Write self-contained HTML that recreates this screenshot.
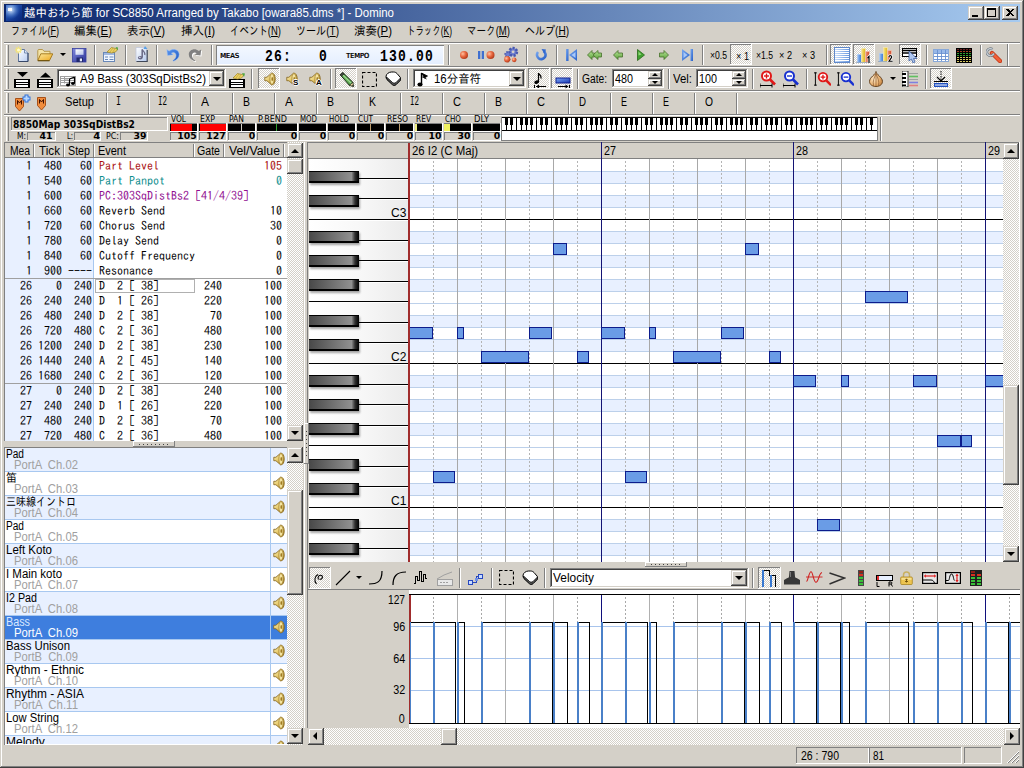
<!DOCTYPE html>
<html lang="ja"><head><meta charset="utf-8"><title>Domino</title>
<style>
html,body{margin:0;padding:0;width:1024px;height:768px;overflow:hidden;background:#d4d0c8}
#w{position:relative;width:1024px;height:768px;overflow:hidden;font-family:"Liberation Sans","IPAGothic",sans-serif;font-size:12px}
#w div,#w span.t,#w svg{position:absolute;box-sizing:border-box}
#w span.t{white-space:pre;display:block}
#w span.m{font-family:"IPAGothic","Liberation Mono",monospace;font-size:12px;line-height:14px}
.dz{background:repeating-conic-gradient(#fff 0% 25%,#d4d0c8 0% 50%) 0 0/2px 2px}
</style></head><body><div id="w">
<div style="left:0px;top:0px;width:1024px;height:768px;background:#d4d0c8"></div>
<div style="left:1px;top:1px;width:1021px;height:1px;background:#ffffff"></div>
<div style="left:1px;top:1px;width:1px;height:765px;background:#ffffff"></div>
<div style="left:0px;top:767px;width:1024px;height:1px;background:#404040"></div>
<div style="left:1023px;top:0px;width:1px;height:768px;background:#404040"></div>
<div style="left:1px;top:766px;width:1022px;height:1px;background:#808080"></div>
<div style="left:1022px;top:1px;width:1px;height:766px;background:#808080"></div>
<div style="left:4px;top:4px;width:1016px;height:18px;background:linear-gradient(90deg,#0a246a 0%,#a6caf0 100%)"></div>
<svg style="left:6px;top:5px" width="16" height="16" viewBox="0 0 16 16"><defs><linearGradient id="ig" x1="0" y1="0" x2="1" y2="1"><stop offset="0" stop-color="#2a5fc0"/><stop offset="1" stop-color="#06257a"/></linearGradient><radialGradient id="ig2" cx="0.3" cy="0.3" r="0.6"><stop offset="0" stop-color="#e8f4ff"/><stop offset="1" stop-color="#3a7ad8" stop-opacity="0"/></radialGradient></defs><rect width="16" height="16" fill="url(#ig)"/><rect width="16" height="16" fill="url(#ig2)"/><path d="M2 3h4v3H2z" fill="#fff" opacity=".9"/></svg>
<span class="t" style="left:24px;top:6px;font-size:12px;line-height:14px;color:#fff;font-family:'Liberation Sans','IPAGothic',sans-serif;transform:scaleX(0.9537);transform-origin:0 0;">越中おわら節 for SC8850 Arranged by Takabo [owara85.dms *] - Domino</span>
<div style="left:968px;top:6px;width:16px;height:14px;background:#d4d0c8;box-shadow:inset -1px -1px 0 #404040,inset 1px 1px 0 #d4d0c8,inset -2px -2px 0 #808080,inset 2px 2px 0 #ffffff;"></div>
<div style="left:984px;top:6px;width:16px;height:14px;background:#d4d0c8;box-shadow:inset -1px -1px 0 #404040,inset 1px 1px 0 #d4d0c8,inset -2px -2px 0 #808080,inset 2px 2px 0 #ffffff;"></div>
<div style="left:1002px;top:6px;width:16px;height:14px;background:#d4d0c8;box-shadow:inset -1px -1px 0 #404040,inset 1px 1px 0 #d4d0c8,inset -2px -2px 0 #808080,inset 2px 2px 0 #ffffff;"></div>
<div style="left:972px;top:15px;width:6px;height:2px;background:#000"></div>
<div style="left:987px;top:8px;width:9px;height:9px;border:1px solid #000;border-top:2px solid #000"></div>
<svg style="left:1006px;top:9px" width="8" height="7" viewBox="0 0 8 7" shape-rendering="crispEdges"><path d="M0 0h2l2 2 2-2h2L5 3.5 8 7H6L4 5 2 7H0l3-3.5z" fill="#000"/></svg>
<span class="t" style="left:11px;top:24px;font-size:12px;line-height:14px;color:#000;transform:scaleX(0.7580);transform-origin:0 0;">ファイル(<u>F</u>)</span>
<span class="t" style="left:74px;top:24px;font-size:12px;line-height:14px;color:#000;transform:scaleX(0.9500);transform-origin:0 0;">編集(<u>E</u>)</span>
<span class="t" style="left:127px;top:24px;font-size:12px;line-height:14px;color:#000;transform:scaleX(0.9500);transform-origin:0 0;">表示(<u>V</u>)</span>
<span class="t" style="left:181px;top:24px;font-size:12px;line-height:14px;color:#000;transform:scaleX(0.9624);transform-origin:0 0;">挿入(<u>I</u>)</span>
<span class="t" style="left:230px;top:24px;font-size:12px;line-height:14px;color:#000;transform:scaleX(0.7886);transform-origin:0 0;">イベント(<u>N</u>)</span>
<span class="t" style="left:296px;top:24px;font-size:12px;line-height:14px;color:#000;transform:scaleX(0.8377);transform-origin:0 0;">ツール(<u>T</u>)</span>
<span class="t" style="left:354px;top:24px;font-size:12px;line-height:14px;color:#000;transform:scaleX(0.9500);transform-origin:0 0;">演奏(<u>P</u>)</span>
<span class="t" style="left:407px;top:24px;font-size:12px;line-height:14px;color:#000;transform:scaleX(0.7031);transform-origin:0 0;">トラック(<u>K</u>)</span>
<span class="t" style="left:467px;top:24px;font-size:12px;line-height:14px;color:#000;transform:scaleX(0.7963);transform-origin:0 0;">マーク(<u>M</u>)</span>
<span class="t" style="left:525px;top:24px;font-size:12px;line-height:14px;color:#000;transform:scaleX(0.8354);transform-origin:0 0;">ヘルプ(<u>H</u>)</span>
<div style="left:4px;top:42px;width:1016px;height:1px;background:#808080"></div>
<div style="left:4px;top:43px;width:1016px;height:1px;background:#ffffff"></div>
<div style="left:4px;top:66px;width:1016px;height:1px;background:#808080"></div>
<div style="left:4px;top:67px;width:1016px;height:1px;background:#ffffff"></div>
<div style="left:4px;top:90px;width:1016px;height:1px;background:#808080"></div>
<div style="left:4px;top:91px;width:1016px;height:1px;background:#ffffff"></div>
<div style="left:4px;top:114px;width:1016px;height:1px;background:#808080"></div>
<div style="left:4px;top:115px;width:1016px;height:1px;background:#ffffff"></div>
<div style="left:6px;top:45px;width:1px;height:20px;background:#ffffff"></div>
<div style="left:8px;top:45px;width:1px;height:20px;background:#808080"></div>
<svg style="left:14px;top:46px" width="16" height="16" viewBox="0 0 16 16"><defs><linearGradient id="ng" x1="0" y1="0" x2="1" y2="1"><stop offset="0" stop-color="#ffffff"/><stop offset="1" stop-color="#b8ccf0"/></linearGradient></defs><path d="M4.500 3.500h6l3.500 3.500v8.500h-9.500z" fill="url(#ng)" stroke="#6078a0" stroke-width="1"/><path d="M10.500 3.500v3.500h3.500" fill="#dfe8fa" stroke="#6078a0" stroke-width=".8"/><path d="M14 7v8.500H4.500" fill="none" stroke="#384868" stroke-width="1"/><g stroke="#f4e478" stroke-width="1.300"><path d="M4.500 .5v7M1 4h7M2 1.500l5 5M7 1.500l-5 5"/></g><circle cx="4.500" cy="4" r="1.500" fill="#fffbd0"/></svg>
<svg style="left:37px;top:47px" width="16" height="16" viewBox="0 0 16 16"><defs><linearGradient id="og" x1="0" y1="0" x2="1" y2="1"><stop offset="0" stop-color="#fce89c"/><stop offset="1" stop-color="#eca820"/></linearGradient></defs><path d="M.8 13V3.500C.8 2.800 1.300 2.500 2 2.500h3.500l1.500 1.800h6v3" fill="#f4e4a8" stroke="#b09040" stroke-width=".9"/><path d="M3.800 6.800h12L12.500 13.500H.8z" fill="url(#og)" stroke="#a07418" stroke-width=".9"/><path d="M.8 13.800h11.700" stroke="#604808" stroke-width="1"/></svg>
<div style="left:60px;top:53px;width:0;height:0;border-left:3px solid transparent;border-right:3px solid transparent;border-top:3px solid #000"></div>
<svg style="left:72px;top:47px" width="16" height="16" viewBox="0 0 16 16"><defs><linearGradient id="svg1" x1="0" y1="0" x2="1" y2="1"><stop offset="0" stop-color="#8088dc"/><stop offset="1" stop-color="#2c3498"/></linearGradient><linearGradient id="svg2" x1="0" y1="0" x2="1" y2="1"><stop offset="0" stop-color="#ffffff"/><stop offset="1" stop-color="#b8c4ec"/></linearGradient></defs><rect x=".5" y="1.500" width="13.500" height="13.500" fill="url(#svg1)" stroke="#3840a0" stroke-width=".8"/><rect x="3.500" y="2.300" width="8" height="5.500" fill="url(#svg2)"/><rect x="4.500" y="10.500" width="6.500" height="4.500" fill="#20286c"/><rect x="7.800" y="11.500" width="2.200" height="2.800" fill="#e8ecfc"/></svg>
<div style="left:94px;top:45px;width:1px;height:20px;background:#808080"></div>
<div style="left:95px;top:45px;width:1px;height:20px;background:#ffffff"></div>
<svg style="left:102px;top:46px" width="16" height="16" viewBox="0 0 16 16"><rect x="1.500" y="6.500" width="11" height="9" fill="#f0f6ff" stroke="#6888b8"/><rect x="2" y="7" width="10" height="2" fill="#a0b8e0"/><path d="M3 11h3M3 13.500h3M7.500 11h4M7.500 13.500h4" stroke="#6888b8"/><path d="M5 6l4.500-4.500L16 3l-2.500 3-4 1z" fill="#ecd060" stroke="#9c8428" stroke-width=".7"/><path d="M6 5l3.500-3.500M8 6l3-4M10.500 6.500l2.500-4" stroke="#b89c38" stroke-width=".6"/><path d="M13.500 1l2.500 .5-.5 3z" fill="#50a840"/></svg>
<div style="left:125px;top:45px;width:1px;height:20px;background:#808080"></div>
<div style="left:126px;top:45px;width:1px;height:20px;background:#ffffff"></div>
<svg style="left:134px;top:46px" width="16" height="16" viewBox="0 0 16 16"><defs><linearGradient id="ndg" x1="0" y1="0" x2="1" y2="1"><stop offset="0" stop-color="#ffffff"/><stop offset="1" stop-color="#b4c8ec"/></linearGradient></defs><path d="M2 1.500h8.500l2.500 2.500v11.500H2z" fill="url(#ndg)" stroke="#c0c8dc" stroke-width=".8"/><path d="M13.200 4v11.700H2.500" fill="none" stroke="#404858" stroke-width="1.200"/><path d="M8.200 3.500v8" stroke="#686884" stroke-width="1.500"/><path d="M8.200 3.500c1 2 3.200 2.500 2.600 5.500" stroke="#686884" stroke-width="1.300" fill="none"/><ellipse cx="6.300" cy="11.800" rx="2.400" ry="1.800" fill="#686884"/><ellipse cx="5.800" cy="11.400" rx=".9" ry=".6" fill="#d0d4e8"/><path d="M11 0l2.500 3h-4z" fill="#58a0e8"/></svg>
<div style="left:156px;top:45px;width:1px;height:20px;background:#808080"></div>
<div style="left:157px;top:45px;width:1px;height:20px;background:#ffffff"></div>
<svg style="left:166px;top:48px" width="14" height="14" viewBox="0 0 14 14"><defs><linearGradient id="ug" x1="0" y1="0" x2="1" y2="1"><stop offset="0" stop-color="#5c98f0"/><stop offset="1" stop-color="#2058c0"/></linearGradient></defs><path d="M.8 1.500L1.500 7.500l5.800-.8L5.400 5.200C7.500 3.800 10 5 10 7.500c0 2-1.300 3.800-3.200 5l.7.800c3.500-1.300 5.700-3.800 5.700-6.800C13.200 2 7.500-.5 3.200 3z" fill="url(#ug)" stroke="#a8c8f8" stroke-width=".5"/></svg>
<svg style="left:188px;top:48px" width="15" height="15" viewBox="0 0 15 15"><g transform="translate(.9 .9)"><path d="M13.200 1.500L12.500 7.500l-5.800-.8L8.600 5.200C6.500 3.800 4 5 4 7.500c0 2 1.300 3.800 3.200 5l-.7.800C3 12 .8 9.500.8 6.500.8 2 6.500-.5 10.800 3z" fill="#fff"/></g><path d="M13.200 1.500L12.500 7.500l-5.800-.8L8.600 5.200C6.500 3.800 4 5 4 7.500c0 2 1.300 3.800 3.200 5l-.7.800C3 12 .8 9.500.8 6.500.8 2 6.500-.5 10.800 3z" fill="#808080"/></svg>
<div style="left:211px;top:45px;width:1px;height:20px;background:#808080"></div>
<div style="left:212px;top:45px;width:1px;height:20px;background:#ffffff"></div>
<div style="left:216px;top:45px;width:228px;height:20px;background:linear-gradient(180deg,#f4f8ff,#e4eeff);box-shadow:inset 1px 1px 0 #808080,inset -1px -1px 0 #ffffff"></div>
<span class="t" style="left:220px;top:52px;font-size:7px;line-height:9px;color:#000;font-family:'DejaVu Sans','Liberation Sans',sans-serif;transform:scaleX(0.9643);transform-origin:0 0;text-shadow:0.4px 0 0 #000;">MEAS</span>
<span class="t" style="left:265px;top:48px;font-size:16.5px;line-height:18.5px;color:#000;font-family:'Liberation Mono',monospace;font-weight:bold;transform:scaleX(0.7890);transform-origin:0 0;letter-spacing:1.5px;">26:</span>
<span class="t" style="left:319px;top:48px;font-size:16.5px;line-height:18.5px;color:#000;font-family:'Liberation Mono',monospace;font-weight:bold;transform:scaleX(0.7890);transform-origin:0 0;letter-spacing:1.5px;">0</span>
<span class="t" style="left:346px;top:52px;font-size:7px;line-height:9px;color:#000;font-family:'DejaVu Sans','Liberation Sans',sans-serif;transform:scaleX(0.9394);transform-origin:0 0;text-shadow:0.4px 0 0 #000;">TEMPO</span>
<span class="t" style="left:380px;top:48px;font-size:16.5px;line-height:18.5px;color:#000;font-family:'Liberation Mono',monospace;font-weight:bold;transform:scaleX(0.7892);transform-origin:0 0;letter-spacing:1.5px;">130.00</span>
<div style="left:448px;top:45px;width:1px;height:20px;background:#808080"></div>
<div style="left:449px;top:45px;width:1px;height:20px;background:#ffffff"></div>
<svg style="left:456px;top:47px" width="16" height="16" viewBox="0 0 16 16"><defs><radialGradient id="rg" cx=".35" cy=".35" r=".7"><stop offset="0" stop-color="#ffc0a0"/><stop offset=".5" stop-color="#e86840"/><stop offset="1" stop-color="#b03818"/></radialGradient></defs><circle cx="8" cy="8" r="4" fill="url(#rg)"/></svg>
<svg style="left:478px;top:47px" width="18" height="16" viewBox="0 0 18 16"><rect x="0" y="4" width="2.300" height="8" fill="#4070d0"/><rect x="3.700" y="4" width="2.300" height="8" fill="#4070d0"/><circle cx="12.500" cy="8" r="4" fill="url(#rg)"/></svg>
<svg style="left:502px;top:46px" width="18" height="17" viewBox="0 0 16 16"><circle cx="10" cy="5.500" r="3.600" fill="#7080d0" stroke="#4858b0" stroke-width="2.400" stroke-dasharray="1.900 1.300"/><circle cx="10" cy="5.500" r="1.300" fill="#d4d0c8"/><circle cx="5" cy="8" r="2.400" fill="#7080d0" stroke="#4858b0" stroke-width="1.800" stroke-dasharray="1.400 1"/><circle cx="4.500" cy="12.500" r="3" fill="url(#rg)"/><circle cx="11" cy="13" r="2.200" fill="url(#rg)"/></svg>
<div style="left:526px;top:45px;width:1px;height:20px;background:#808080"></div>
<div style="left:527px;top:45px;width:1px;height:20px;background:#ffffff"></div>
<svg style="left:535px;top:49px" width="12" height="12" viewBox="0 0 12 12"><defs><linearGradient id="gg" x1="0" y1="0" x2="0" y2="1"><stop offset="0" stop-color="#b8e498"/><stop offset="1" stop-color="#58a038"/></linearGradient><linearGradient id="bg" x1="0" y1="0" x2="1" y2="1"><stop offset="0" stop-color="#78a8f0"/><stop offset="1" stop-color="#2860c8"/></linearGradient></defs><path d="M8.500 2.200A4.300 4.300 0 1 1 3 3" fill="none" stroke="url(#bg)" stroke-width="2.600"/><path d="M6.500 0l4.500 .5-1.500 4.500z" fill="#3068d0"/></svg>
<div style="left:556px;top:45px;width:1px;height:20px;background:#808080"></div>
<div style="left:557px;top:45px;width:1px;height:20px;background:#ffffff"></div>
<svg style="left:566px;top:49px" width="11" height="12" viewBox="0 0 11 12"><rect x="0" y="0" width="2.500" height="12" fill="url(#bg)"/><path d="M11 0v12L3 6z" fill="url(#bg)"/><path d="M9.500 3v6L5.500 6z" fill="#a8c8f8"/></svg>
<svg style="left:587px;top:50px" width="15" height="10" viewBox="0 0 15 10"><path d="M5 .5V3h2.500v4H5v2.500L.5 5z" fill="url(#gg)" stroke="#48702c" stroke-width=".8"/><path d="M11 .5V3h3.500v4H11v2.500L6 5z" fill="url(#gg)" stroke="#48702c" stroke-width=".8"/></svg>
<svg style="left:613px;top:50px" width="10" height="10" viewBox="0 0 10 10"><path d="M5 .5V3h4.500v4H5v2.500L.5 5z" fill="url(#gg)" stroke="#48702c" stroke-width=".8"/></svg>
<svg style="left:637px;top:49px" width="8" height="12" viewBox="0 0 8 12"><path d="M.5 .5v11L7.500 6z" fill="#40a030" stroke="#286818" stroke-width=".8"/><path d="M1.500 2.500v4l3-1z" fill="#90d878"/></svg>
<svg style="left:659px;top:50px" width="10" height="10" viewBox="0 0 10 10"><path d="M5 .5V3H.5v4H5v2.500L9.500 5z" fill="url(#gg)" stroke="#48702c" stroke-width=".8"/></svg>
<svg style="left:682px;top:49px" width="11" height="12" viewBox="0 0 11 12"><rect x="8.500" y="0" width="2.500" height="12" fill="url(#bg)"/><path d="M0 0v12l8-6z" fill="url(#bg)"/><path d="M1.500 3v6l4-3z" fill="#a8c8f8"/></svg>
<div style="left:702px;top:45px;width:1px;height:20px;background:#808080"></div>
<div style="left:703px;top:45px;width:1px;height:20px;background:#ffffff"></div>
<span class="t" style="left:710px;top:49px;font-size:11px;line-height:13px;color:#000;font-family:'Liberation Sans','IPAGothic',sans-serif;transform:scaleX(0.7827);transform-origin:0 0;">×0.5</span>
<div class="dz" style="left:730px;top:44px;width:22px;height:21px;box-shadow:inset -1px -1px 0 #ffffff,inset 1px 1px 0 #808080;"></div>
<span class="t" style="left:736px;top:50px;font-size:11px;line-height:13px;color:#000;font-family:'Liberation Sans','IPAGothic',sans-serif;transform:scaleX(0.8328);transform-origin:0 0;">× 1</span>
<span class="t" style="left:756px;top:49px;font-size:11px;line-height:13px;color:#000;font-family:'Liberation Sans','IPAGothic',sans-serif;transform:scaleX(0.7827);transform-origin:0 0;">×1.5</span>
<span class="t" style="left:779px;top:49px;font-size:11px;line-height:13px;color:#000;font-family:'Liberation Sans','IPAGothic',sans-serif;transform:scaleX(0.8328);transform-origin:0 0;">× 2</span>
<span class="t" style="left:802px;top:49px;font-size:11px;line-height:13px;color:#000;font-family:'Liberation Sans','IPAGothic',sans-serif;transform:scaleX(0.8328);transform-origin:0 0;">× 3</span>
<div style="left:826px;top:45px;width:1px;height:20px;background:#808080"></div>
<div style="left:827px;top:45px;width:1px;height:20px;background:#ffffff"></div>
<div class="dz" style="left:830px;top:44px;width:22px;height:21px;box-shadow:inset -1px -1px 0 #ffffff,inset 1px 1px 0 #808080;"></div>
<svg style="left:834px;top:47px" width="16" height="16" viewBox="0 0 16 16"><defs><linearGradient id="lg1" x1="0" y1="0" x2="1" y2="0"><stop offset="0" stop-color="#c8dcf8"/><stop offset="1" stop-color="#6898e0"/></linearGradient></defs><rect x=".5" y=".5" width="15" height="15" fill="#fff" stroke="#6088c8"/><g shape-rendering="crispEdges" fill="url(#lg1)"><rect x="1" y="2" width="14" height="1"/><rect x="1" y="4" width="14" height="1"/><rect x="1" y="6" width="14" height="1"/><rect x="1" y="8" width="14" height="1"/><rect x="1" y="10" width="14" height="1"/><rect x="1" y="12" width="14" height="1"/><rect x="1" y="14" width="14" height="1"/></g></svg>
<div class="dz" style="left:853px;top:44px;width:22px;height:21px;box-shadow:inset -1px -1px 0 #ffffff,inset 1px 1px 0 #808080;"></div>
<svg style="left:856px;top:47px" width="16" height="16" viewBox="0 0 16 16"><rect x="1.500" y="7.500" width="4" height="8" fill="#5088dc" stroke="#b4d0f4" stroke-width=".8"/><rect x="2.300" y="8" width="1" height="7" fill="#98c0f4"/><rect x="5.500" y="1.500" width="4" height="14" fill="#e4c034" stroke="#f4e8b0" stroke-width=".8"/><rect x="6.300" y="2" width="1" height="13" fill="#f8e480"/><rect x="9.500" y="4.500" width="4" height="11" fill="#d85c3c" stroke="#f0c0b0" stroke-width=".8"/><rect x="10.300" y="5" width="1" height="10" fill="#f09878"/><path d="M0 15.700h15" stroke="#8098b8" stroke-width=".8"/><path d="M11.500 11l1.500-1.500V16" stroke="#fff" stroke-width="2.600" fill="none"/><path d="M11.500 11l1.500-1.500V16" stroke="#000" stroke-width="1.200" fill="none"/></svg>
<svg style="left:878px;top:46px" width="16" height="16" viewBox="0 0 16 16"><rect x="1.500" y="7.500" width="4" height="8" fill="#5088dc" stroke="#b4d0f4" stroke-width=".8"/><rect x="2.300" y="8" width="1" height="7" fill="#98c0f4"/><rect x="5.500" y="1.500" width="4" height="14" fill="#e4c034" stroke="#f4e8b0" stroke-width=".8"/><rect x="6.300" y="2" width="1" height="13" fill="#f8e480"/><rect x="9.500" y="4.500" width="4" height="11" fill="#d85c3c" stroke="#f0c0b0" stroke-width=".8"/><rect x="10.300" y="5" width="1" height="10" fill="#f09878"/><path d="M0 15.700h15" stroke="#8098b8" stroke-width=".8"/><path d="M10.800 11c.6-2 3.400-1.600 2.800.4L11 15.300h3.500" stroke="#fff" stroke-width="2.600" fill="none"/><path d="M10.800 11c.6-2 3.400-1.600 2.800.4L11 15.300h3.500" stroke="#000" stroke-width="1.100" fill="none"/></svg>
<div class="dz" style="left:899px;top:44px;width:22px;height:21px;box-shadow:inset -1px -1px 0 #ffffff,inset 1px 1px 0 #808080;"></div>
<svg style="left:902px;top:47px" width="16" height="16" viewBox="0 0 16 16"><rect x=".5" y="1.500" width="14" height="8" fill="#fff" stroke="#000"/><path d="M1 3.500h14M1 6h14" stroke="#000" stroke-width="1.400"/><path d="M7 4v10l2.500-2 1.500 4 2-1-1.500-3.500H15z" fill="#b0c8f0" stroke="#4060a0" stroke-width=".8"/></svg>
<div style="left:926px;top:45px;width:1px;height:20px;background:#808080"></div>
<div style="left:927px;top:45px;width:1px;height:20px;background:#ffffff"></div>
<svg style="left:933px;top:49px" width="16" height="13" viewBox="0 0 16 13"><rect x=".5" y=".5" width="15" height="12" fill="#fff" stroke="#88a8d8"/><rect x="1" y="1" width="14" height="3" fill="#98b8e8"/><path d="M1 4.500h14M1 7.500h14M1 10.500h14M4.500 1v11M8.500 1v11M12.500 1v11" stroke="#6890d0" stroke-width=".9"/></svg>
<svg style="left:956px;top:48px" width="16" height="15" viewBox="0 0 16 15"><rect width="16" height="15" fill="#000"/><g shape-rendering="crispEdges"><g fill="#682020"><rect x="1" y="1" width="2" height="1"/><rect x="4" y="1" width="2" height="1"/><rect x="7" y="1" width="2" height="1"/><rect x="10" y="1" width="2" height="1"/><rect x="13" y="1" width="2" height="1"/></g><g fill="#a04020"><rect x="1" y="3" width="2" height="1"/><rect x="4" y="3" width="2" height="1"/><rect x="7" y="3" width="2" height="1"/><rect x="10" y="3" width="2" height="1"/><rect x="13" y="3" width="2" height="1"/></g><g fill="#30a030"><rect x="1" y="5" width="2" height="1"/><rect x="4" y="5" width="2" height="1"/><rect x="7" y="5" width="2" height="1"/><rect x="10" y="5" width="2" height="1"/><rect x="13" y="5" width="2" height="1"/><rect x="1" y="7" width="2" height="1"/><rect x="4" y="7" width="2" height="1"/><rect x="7" y="7" width="2" height="1"/><rect x="10" y="7" width="2" height="1"/><rect x="13" y="7" width="2" height="1"/></g><g fill="#d8c860"><rect x="1" y="9" width="2" height="1"/><rect x="4" y="9" width="2" height="1"/><rect x="7" y="9" width="2" height="1"/><rect x="10" y="9" width="2" height="1"/><rect x="13" y="9" width="2" height="1"/><rect x="1" y="11" width="2" height="1"/><rect x="4" y="11" width="2" height="1"/><rect x="7" y="11" width="2" height="1"/><rect x="10" y="11" width="2" height="1"/><rect x="13" y="11" width="2" height="1"/><rect x="1" y="13" width="2" height="1"/><rect x="4" y="13" width="2" height="1"/><rect x="7" y="13" width="2" height="1"/><rect x="10" y="13" width="2" height="1"/><rect x="13" y="13" width="2" height="1"/></g></g></svg>
<div style="left:980px;top:45px;width:1px;height:20px;background:#808080"></div>
<div style="left:981px;top:45px;width:1px;height:20px;background:#ffffff"></div>
<svg style="left:986px;top:47px" width="16" height="16" viewBox="0 0 16 16"><path d="M6 6l8 8" stroke="#c03818" stroke-width="4.400" stroke-linecap="round"/><path d="M6 6l8 8" stroke="#f06038" stroke-width="2.800" stroke-linecap="round"/><path d="M6.500 2.200A3.600 3.600 0 1 0 7.800 6.500" fill="none" stroke="#707880" stroke-width="2.600"/><path d="M6.500 2.200A3.600 3.600 0 1 0 7.800 6.500" fill="none" stroke="#c8d0d8" stroke-width="1.200"/></svg>
<div style="left:1007px;top:44px;width:1px;height:22px;background:#808080"></div>
<div style="left:1008px;top:44px;width:1px;height:22px;background:#ffffff"></div>
<div style="left:6px;top:69px;width:1px;height:20px;background:#ffffff"></div>
<div style="left:8px;top:69px;width:1px;height:20px;background:#808080"></div>
<svg style="left:14px;top:72px" width="16" height="16" viewBox="0 0 16 16"><path d="M3 0h11L8.500 5z" fill="#000"/><g shape-rendering="crispEdges"><rect x="0" y="7" width="16" height="9" fill="#000"/><rect x="2" y="8" width="12" height="2" fill="#fff"/><rect x="2" y="11" width="12" height="1" fill="#fff"/><rect x="2" y="13" width="12" height="2" fill="#fff"/></g></svg>
<svg style="left:37px;top:72px" width="16" height="16" viewBox="0 0 16 16"><path d="M3 5.500h11L8.500 .5z" fill="#000"/><g shape-rendering="crispEdges"><rect x="0" y="7" width="16" height="9" fill="#000"/><rect x="2" y="8" width="12" height="2" fill="#fff"/><rect x="2" y="11" width="12" height="1" fill="#fff"/><rect x="2" y="13" width="12" height="2" fill="#fff"/></g></svg>
<div style="left:57px;top:69px;width:169px;height:19px;background:#fff;box-shadow:inset -1px -1px 0 #ffffff,inset 1px 1px 0 #808080,inset -2px -2px 0 #d4d0c8,inset 2px 2px 0 #404040;"></div>
<svg style="left:60px;top:75px" width="16" height="12" viewBox="0 0 16 12"><rect x=".5" y="1.500" width="15" height="9" fill="#fff" stroke="#a0a0a0"/><path d="M1 3.500h14M1 5.500h14M1 7.500h14" stroke="#a0a0a0"/><path d="M4.500 1v7.500M4.500 4h3.500" stroke="#a0a0a0"/><path d="M9.500 4v6M14.500 2v6M9.500 4l5-2" stroke="#000" stroke-width="1.200" fill="none"/><ellipse cx="8" cy="10" rx="2" ry="1.400" fill="#000"/><ellipse cx="13" cy="8.500" rx="2" ry="1.400" fill="#000"/></svg>
<span class="t" style="left:80px;top:72px;font-size:12px;line-height:14px;color:#000;font-family:'Liberation Sans','IPAGothic',sans-serif;transform:scaleX(0.9541);transform-origin:0 0;">A9 Bass (303SqDistBs2)</span>
<div style="left:209px;top:71px;width:15px;height:15px;background:#d4d0c8;box-shadow:inset -1px -1px 0 #404040,inset 1px 1px 0 #d4d0c8,inset -2px -2px 0 #808080,inset 2px 2px 0 #ffffff;"></div>
<div style="left:213px;top:77px;width:0;height:0;border-left:4px solid transparent;border-right:4px solid transparent;border-top:4px solid #000"></div>
<svg style="left:229px;top:72px" width="16" height="16" viewBox="0 0 16 16"><g shape-rendering="crispEdges"><rect x="0" y="7" width="16" height="9" fill="#000"/><rect x="2" y="8" width="12" height="2" fill="#fff"/><rect x="2" y="11" width="12" height="1" fill="#fff"/><rect x="2" y="13" width="12" height="2" fill="#fff"/></g><path d="M4 6l4.500-4.500L15 3l-2.500 3-4 1z" fill="#ecd060" stroke="#9c8428" stroke-width=".7"/><path d="M5 5l3.500-3.500M7 6l3-4M9.500 6.500l2.500-4" stroke="#b89c38" stroke-width=".6"/><path d="M13 1l3 .5-1 3.500z" fill="#50a840"/></svg>
<div style="left:251px;top:69px;width:1px;height:20px;background:#808080"></div>
<div style="left:252px;top:69px;width:1px;height:20px;background:#ffffff"></div>
<div class="dz" style="left:258px;top:68px;width:22px;height:21px;box-shadow:inset -1px -1px 0 #ffffff,inset 1px 1px 0 #808080;"></div>
<svg style="left:264px;top:72px" width="12" height="14" viewBox="0 0 12.500 14"><defs><linearGradient id="sg1" x1="0" y1="0" x2="1" y2="1"><stop offset="0" stop-color="#fff8c8"/><stop offset=".45" stop-color="#e8cc70"/><stop offset="1" stop-color="#a88428"/></linearGradient></defs><path d="M.8 5.200h2.200L8 .8c2.500 0 3.700 3 3.700 6.200S10.500 13.200 8 13.200L3 8.800H.8z" fill="url(#sg1)" stroke="#7c5c14" stroke-width=".8"/><ellipse cx="8.300" cy="7" rx="2.100" ry="5.600" fill="#f4e4a0" stroke="#9c7820" stroke-width=".7"/><ellipse cx="8.600" cy="7" rx=".9" ry="2.200" fill="#a07c24"/></svg>
<svg style="left:286px;top:72px" width="12" height="14" viewBox="0 0 12.500 14"><defs><linearGradient id="sg2" x1="0" y1="0" x2="1" y2="1"><stop offset="0" stop-color="#fff8c8"/><stop offset=".45" stop-color="#e8cc70"/><stop offset="1" stop-color="#a88428"/></linearGradient></defs><path d="M.8 5.200h2.200L8 .8c2.500 0 3.700 3 3.700 6.200S10.500 13.200 8 13.200L3 8.800H.8z" fill="url(#sg2)" stroke="#7c5c14" stroke-width=".8"/><ellipse cx="8.300" cy="7" rx="2.100" ry="5.600" fill="#f4e4a0" stroke="#9c7820" stroke-width=".7"/><ellipse cx="8.600" cy="7" rx=".9" ry="2.200" fill="#a07c24"/></svg>
<span class="t" style="left:293px;top:78px;font-size:8px;line-height:10px;color:#000;font-family:'Liberation Sans',sans-serif;font-weight:bold;text-shadow:1px 0 0 #fff,-1px 0 0 #fff,0 1px 0 #fff,0 -1px 0 #fff;">S</span>
<svg style="left:309px;top:72px" width="12" height="14" viewBox="0 0 12.500 14"><defs><linearGradient id="sg3" x1="0" y1="0" x2="1" y2="1"><stop offset="0" stop-color="#fff8c8"/><stop offset=".45" stop-color="#e8cc70"/><stop offset="1" stop-color="#a88428"/></linearGradient></defs><path d="M.8 5.200h2.200L8 .8c2.500 0 3.700 3 3.700 6.200S10.500 13.200 8 13.200L3 8.800H.8z" fill="url(#sg3)" stroke="#7c5c14" stroke-width=".8"/><ellipse cx="8.300" cy="7" rx="2.100" ry="5.600" fill="#f4e4a0" stroke="#9c7820" stroke-width=".7"/><ellipse cx="8.600" cy="7" rx=".9" ry="2.200" fill="#a07c24"/></svg>
<span class="t" style="left:316px;top:78px;font-size:8px;line-height:10px;color:#000;font-family:'Liberation Sans',sans-serif;font-weight:bold;text-shadow:1px 0 0 #fff,-1px 0 0 #fff,0 1px 0 #fff,0 -1px 0 #fff;">A</span>
<div style="left:330px;top:69px;width:1px;height:20px;background:#808080"></div>
<div style="left:331px;top:69px;width:1px;height:20px;background:#ffffff"></div>
<div class="dz" style="left:335px;top:68px;width:22px;height:21px;box-shadow:inset -1px -1px 0 #ffffff,inset 1px 1px 0 #808080;"></div>
<svg style="left:339px;top:72px" width="16" height="16" viewBox="0 0 16 16"><path d="M1.200 2.800L3.800 .6l10 9.600-.3 3.200-3.200-.2z" fill="#5ca850" stroke="#1c2c18" stroke-width="1"/><path d="M3.200 2.400l9.200 9" stroke="#a4dc98" stroke-width="1.200"/><path d="M13.800 10.200l.8 4.400-4.300-1.200z" fill="#ecd4a0" stroke="#1c2c18" stroke-width=".8"/><path d="M14.600 14.600l-1.800-.5 1.400-1.300z" fill="#181818"/><path d="M1.200 2.800L3.800.6l1.400 1.300-2.600 2.300z" fill="#484848" stroke="#1c2c18" stroke-width=".6"/></svg>
<svg style="left:362px;top:72px" width="15" height="15" viewBox="0 0 15 15"><rect x=".5" y=".5" width="14" height="14" fill="none" stroke="#000" stroke-dasharray="3 2" stroke-width="1.200"/></svg>
<svg style="left:385px;top:71px" width="16" height="16" viewBox="0 0 16 16"><path d="M1 5.500C1 3 4 1 6.500 1h2c1.500 0 2.500.5 3.500 1.500l3 3.500c1 1 1 2.500 0 3.500l-4 4c-1 .8-2.500.8-3.500 0L2 8.500c-.8-.8-1-2-1-3z" fill="#fff" stroke="#000" stroke-width="1"/><path d="M1.500 6l6 5.500c1 .8 2.500.8 3.500 0l4.500-4.500c.3 1 .2 2-.6 2.800l-4 4c-1 .8-2.500.8-3.500 0L2 8.500c-.6-.6-.7-1.500-.5-2.500z" fill="#585858" stroke="#000" stroke-width=".8"/></svg>
<div style="left:407px;top:69px;width:1px;height:20px;background:#808080"></div>
<div style="left:408px;top:69px;width:1px;height:20px;background:#ffffff"></div>
<div style="left:413px;top:69px;width:113px;height:19px;background:#fff;box-shadow:inset -1px -1px 0 #ffffff,inset 1px 1px 0 #808080,inset -2px -2px 0 #d4d0c8,inset 2px 2px 0 #404040;"></div>
<svg style="left:417px;top:72px" width="12" height="15" viewBox="0 0 12 15"><path d="M4.500 1v11" stroke="#000" stroke-width="1.400"/><path d="M4.500 1l6 3-3 2z M4.500 4.500l5 2.500" fill="#000" stroke="#000" stroke-width=".8"/><ellipse cx="3" cy="12.500" rx="2.600" ry="2" fill="#000"/></svg>
<span class="t" style="left:434px;top:72px;font-size:12px;line-height:14px;color:#000;font-family:'Liberation Sans','IPAGothic',sans-serif;transform:scaleX(0.9522);transform-origin:0 0;">16分音符</span>
<div style="left:509px;top:71px;width:15px;height:15px;background:#d4d0c8;box-shadow:inset -1px -1px 0 #404040,inset 1px 1px 0 #d4d0c8,inset -2px -2px 0 #808080,inset 2px 2px 0 #ffffff;"></div>
<div style="left:513px;top:77px;width:0;height:0;border-left:4px solid transparent;border-right:4px solid transparent;border-top:4px solid #000"></div>
<div class="dz" style="left:528px;top:68px;width:22px;height:21px;box-shadow:inset -1px -1px 0 #ffffff,inset 1px 1px 0 #808080;"></div>
<svg style="left:533px;top:72px" width="14" height="16" viewBox="0 0 14 16"><path d="M5.500 1v9" stroke="#000" stroke-width="1.200"/><path d="M5.500 1.500c1.200 1.800 3.300 2 2.500 5" stroke="#000" fill="none" stroke-width="1.300"/><ellipse cx="3.700" cy="10.200" rx="2.500" ry="1.700" fill="#000" transform="rotate(-20 3.700 10.200)"/><g shape-rendering="crispEdges"><rect x="1" y="13" width="1" height="3" fill="#000"/><rect x="3" y="14" width="10" height="1" fill="#000"/></g><path d="M3 14.500l3-2v4z" fill="#000"/></svg>
<div class="dz" style="left:551px;top:68px;width:22px;height:21px;box-shadow:inset -1px -1px 0 #ffffff,inset 1px 1px 0 #808080;"></div>
<svg style="left:555px;top:77px" width="16" height="12" viewBox="0 0 16 12"><defs><linearGradient id="brg" x1="0" y1="0" x2="1" y2="1"><stop offset="0" stop-color="#78a4f8"/><stop offset="1" stop-color="#1838b0"/></linearGradient></defs><rect x="1" y="1" width="14" height="5" fill="url(#brg)" stroke="#10208c" stroke-width="1"/><g shape-rendering="crispEdges"><rect x="3" y="9" width="10" height="1" fill="#000"/><rect x="14" y="8" width="1" height="3" fill="#000"/></g><path d="M13.500 9.500l-3-2v4z" fill="#000"/></svg>
<div style="left:577px;top:69px;width:1px;height:20px;background:#808080"></div>
<div style="left:578px;top:69px;width:1px;height:20px;background:#ffffff"></div>
<span class="t" style="left:582px;top:72px;font-size:12px;line-height:14px;color:#000;font-family:'Liberation Sans','IPAGothic',sans-serif;transform:scaleX(0.8515);transform-origin:0 0;">Gate:</span>
<div style="left:612px;top:69px;width:52px;height:19px;background:#fff;box-shadow:inset -1px -1px 0 #ffffff,inset 1px 1px 0 #808080,inset -2px -2px 0 #d4d0c8,inset 2px 2px 0 #404040;"></div>
<span class="t" style="left:615px;top:72px;font-size:12px;line-height:14px;color:#000;font-family:'Liberation Sans','IPAGothic',sans-serif;transform:scaleX(0.8986);transform-origin:0 0;">480</span>
<div style="left:648px;top:71px;width:14px;height:8px;background:#d4d0c8;box-shadow:inset -1px -1px 0 #404040,inset 1px 1px 0 #d4d0c8,inset -2px -2px 0 #808080,inset 2px 2px 0 #ffffff;"></div>
<div style="left:648px;top:79px;width:14px;height:7px;background:#d4d0c8;box-shadow:inset -1px -1px 0 #404040,inset 1px 1px 0 #d4d0c8,inset -2px -2px 0 #808080,inset 2px 2px 0 #ffffff;"></div>
<div style="left:652px;top:73px;width:0;height:0;border-left:3px solid transparent;border-right:3px solid transparent;border-bottom:3px solid #000"></div>
<div style="left:652px;top:81px;width:0;height:0;border-left:3px solid transparent;border-right:3px solid transparent;border-top:3px solid #000"></div>
<div style="left:668px;top:69px;width:1px;height:20px;background:#808080"></div>
<div style="left:669px;top:69px;width:1px;height:20px;background:#ffffff"></div>
<span class="t" style="left:673px;top:72px;font-size:12px;line-height:14px;color:#000;font-family:'Liberation Sans','IPAGothic',sans-serif;transform:scaleX(0.9493);transform-origin:0 0;">Vel:</span>
<div style="left:696px;top:69px;width:52px;height:19px;background:#fff;box-shadow:inset -1px -1px 0 #ffffff,inset 1px 1px 0 #808080,inset -2px -2px 0 #d4d0c8,inset 2px 2px 0 #404040;"></div>
<span class="t" style="left:699px;top:72px;font-size:12px;line-height:14px;color:#000;font-family:'Liberation Sans','IPAGothic',sans-serif;transform:scaleX(0.8986);transform-origin:0 0;">100</span>
<div style="left:732px;top:71px;width:14px;height:8px;background:#d4d0c8;box-shadow:inset -1px -1px 0 #404040,inset 1px 1px 0 #d4d0c8,inset -2px -2px 0 #808080,inset 2px 2px 0 #ffffff;"></div>
<div style="left:732px;top:79px;width:14px;height:7px;background:#d4d0c8;box-shadow:inset -1px -1px 0 #404040,inset 1px 1px 0 #d4d0c8,inset -2px -2px 0 #808080,inset 2px 2px 0 #ffffff;"></div>
<div style="left:736px;top:73px;width:0;height:0;border-left:3px solid transparent;border-right:3px solid transparent;border-bottom:3px solid #000"></div>
<div style="left:736px;top:81px;width:0;height:0;border-left:3px solid transparent;border-right:3px solid transparent;border-top:3px solid #000"></div>
<div style="left:752px;top:69px;width:1px;height:20px;background:#808080"></div>
<div style="left:753px;top:69px;width:1px;height:20px;background:#ffffff"></div>
<svg style="left:760px;top:70px" width="16" height="18" viewBox="0 0 16 18"><circle cx="6.500" cy="6" r="4.500" fill="#fff" stroke="#e01818" stroke-width="2"/><path d="M10 9.500l5 5" stroke="#e01818" stroke-width="2.600"/><path d="M4 6h5" stroke="#e01818" stroke-width="1.400"/><path d="M6.500 3.500v5" stroke="#e01818" stroke-width="1.400"/><path d="M0 15.500h12M0 13.500v4M12 13.500v4" stroke="#000" stroke-width="1"/></svg>
<svg style="left:783px;top:70px" width="16" height="18" viewBox="0 0 16 18"><circle cx="6.500" cy="6" r="4.500" fill="#fff" stroke="#1830d0" stroke-width="2"/><path d="M10 9.500l5 5" stroke="#1830d0" stroke-width="2.600"/><path d="M4 6h5" stroke="#1830d0" stroke-width="1.400"/><path d="M0 15.500h12M0 13.500v4M12 13.500v4" stroke="#000" stroke-width="1"/></svg>
<div style="left:806px;top:69px;width:1px;height:20px;background:#808080"></div>
<div style="left:807px;top:69px;width:1px;height:20px;background:#ffffff"></div>
<svg style="left:814px;top:71px" width="17" height="16" viewBox="0 0 18 16"><g transform="translate(3,0)"><circle cx="6.500" cy="6" r="4.500" fill="#fff" stroke="#e01818" stroke-width="2"/><path d="M10 9.500l5 5" stroke="#e01818" stroke-width="2.600"/><path d="M4 6h5" stroke="#e01818" stroke-width="1.400"/><path d="M6.500 3.500v5" stroke="#e01818" stroke-width="1.400"/></g><path d="M1.500 1v14M0 1.500h3M0 14.500h3" stroke="#000" stroke-width="1"/></svg>
<svg style="left:837px;top:71px" width="17" height="16" viewBox="0 0 18 16"><g transform="translate(3,0)"><circle cx="6.500" cy="6" r="4.500" fill="#fff" stroke="#1830d0" stroke-width="2"/><path d="M10 9.500l5 5" stroke="#1830d0" stroke-width="2.600"/><path d="M4 6h5" stroke="#1830d0" stroke-width="1.400"/></g><path d="M1.500 1v14M0 1.500h3M0 14.500h3" stroke="#000" stroke-width="1"/></svg>
<div style="left:860px;top:69px;width:1px;height:20px;background:#808080"></div>
<div style="left:861px;top:69px;width:1px;height:20px;background:#ffffff"></div>
<svg style="left:868px;top:71px" width="16" height="16" viewBox="0 0 16 16"><defs><radialGradient id="onr" cx=".35" cy=".5" r=".7"><stop offset="0" stop-color="#fce8c8"/><stop offset=".6" stop-color="#e8b070"/><stop offset="1" stop-color="#b87838"/></radialGradient></defs><path d="M8 .5c0 3 6.500 5.500 6.500 10 0 3-3 5-6.500 5s-6.500-2-6.500-5C1.500 6 8 3.500 8 .5z" fill="url(#onr)" stroke="#583818" stroke-width=".9"/><path d="M8 2.500c-1.500 4-3.500 7-2.500 12.500M8 2.500c1.500 4 3.500 7 2.500 12.500M8 3v12.500" stroke="#8c5c30" fill="none" stroke-width=".7"/></svg>
<div style="left:890px;top:77px;width:0;height:0;border-left:3px solid transparent;border-right:3px solid transparent;border-top:3px solid #000"></div>
<svg style="left:902px;top:71px" width="16" height="16" viewBox="0 0 16 16"><rect x="0" y="0" width="6" height="16" fill="#fff" stroke="#000" stroke-width=".8"/><path d="M0 2h4v2H0zM0 6h4v2H0zM0 10h4v2H0zM0 13.500h4v1.500H0z" fill="#000"/><path d="M7 2.500h9" stroke="#a0a0a0"/><path d="M7 5.500h9" stroke="#60c060" stroke-width="1.600"/><path d="M7 8.500h9" stroke="#a0a0a0"/><path d="M7 11.500h9" stroke="#8080e0" stroke-width="1.600"/><path d="M7 14.500h9" stroke="#e08080" stroke-width="1.600"/></svg>
<div style="left:925px;top:69px;width:1px;height:20px;background:#808080"></div>
<div style="left:926px;top:69px;width:1px;height:20px;background:#ffffff"></div>
<div class="dz" style="left:930px;top:68px;width:22px;height:21px;box-shadow:inset -1px -1px 0 #ffffff,inset 1px 1px 0 #808080;"></div>
<svg style="left:933px;top:71px" width="16" height="16" viewBox="0 0 16 16"><path d="M8 0v9" stroke="#000" stroke-dasharray="1.500 1"/><path d="M4 6l4 4 4-4" fill="none" stroke="#000" stroke-width="1.200"/><path d="M1 10.500h14" stroke="#000"/><rect x="1.500" y="12.500" width="13" height="3" fill="#fff" stroke="#2050c0"/><path d="M2 14h12" stroke="#2050c0"/></svg>
<div style="left:6px;top:93px;width:1px;height:20px;background:#ffffff"></div>
<div style="left:8px;top:93px;width:1px;height:20px;background:#808080"></div>
<svg style="left:14px;top:94px" width="17" height="18" viewBox="0 0 17 18"><path d="M1.500 4.500h8v8l-4 4.500-4-4.500z" fill="#f08c3c" stroke="#a85018" stroke-width="1"/><path d="M3.500 10.500v-4l2 2.500 2-2.500v4" fill="none" stroke="#401000" stroke-width="1"/><path d="M12.500 .5v8M8.500 4.500h8" stroke="#3070d8" stroke-width="4"/><path d="M12.500 1.500v6M9.500 4.500h6" stroke="#b8d8ff" stroke-width="2"/></svg>
<svg style="left:36px;top:97px" width="11" height="15" viewBox="0 0 11 15"><path d="M1.500 .5h8v8l-4 4.500-4-4.500z" fill="#f08c3c" stroke="#a85018" stroke-width="1"/><path d="M3.500 6.500v-4l2 2.500 2-2.500v4" fill="none" stroke="#401000" stroke-width="1"/></svg>
<span class="t" style="left:65px;top:95px;font-size:12px;line-height:14px;color:#000;font-family:'Liberation Sans','IPAGothic',sans-serif;transform:scaleX(0.9248);transform-origin:0 0;">Setup</span>
<div style="left:106px;top:93px;width:1px;height:21px;background:#808080"></div>
<div style="left:107px;top:93px;width:1px;height:21px;background:#ffffff"></div>
<span class="t" style="left:116px;top:95px;font-size:12px;line-height:14px;color:#000;font-family:'Liberation Mono',monospace;transform:scaleX(0.6941);transform-origin:0 0;">I</span>
<div style="left:148px;top:93px;width:1px;height:21px;background:#808080"></div>
<div style="left:149px;top:93px;width:1px;height:21px;background:#ffffff"></div>
<span class="t" style="left:158px;top:95px;font-size:12px;line-height:14px;color:#000;font-family:'Liberation Mono',monospace;transform:scaleX(0.6247);transform-origin:0 0;">I2</span>
<div style="left:190px;top:93px;width:1px;height:21px;background:#808080"></div>
<div style="left:191px;top:93px;width:1px;height:21px;background:#ffffff"></div>
<span class="t" style="left:201px;top:95px;font-size:12px;line-height:14px;color:#000;font-family:'Liberation Sans','IPAGothic',sans-serif;transform:scaleX(0.9981);transform-origin:0 0;">A</span>
<div style="left:232px;top:93px;width:1px;height:21px;background:#808080"></div>
<div style="left:233px;top:93px;width:1px;height:21px;background:#ffffff"></div>
<span class="t" style="left:243px;top:95px;font-size:12px;line-height:14px;color:#000;font-family:'Liberation Sans','IPAGothic',sans-serif;transform:scaleX(0.8733);transform-origin:0 0;">B</span>
<div style="left:274px;top:93px;width:1px;height:21px;background:#808080"></div>
<div style="left:275px;top:93px;width:1px;height:21px;background:#ffffff"></div>
<span class="t" style="left:285px;top:95px;font-size:12px;line-height:14px;color:#000;font-family:'Liberation Sans','IPAGothic',sans-serif;transform:scaleX(0.9981);transform-origin:0 0;">A</span>
<div style="left:316px;top:93px;width:1px;height:21px;background:#808080"></div>
<div style="left:317px;top:93px;width:1px;height:21px;background:#ffffff"></div>
<span class="t" style="left:327px;top:95px;font-size:12px;line-height:14px;color:#000;font-family:'Liberation Sans','IPAGothic',sans-serif;transform:scaleX(0.8733);transform-origin:0 0;">B</span>
<div style="left:358px;top:93px;width:1px;height:21px;background:#808080"></div>
<div style="left:359px;top:93px;width:1px;height:21px;background:#ffffff"></div>
<span class="t" style="left:369px;top:95px;font-size:12px;line-height:14px;color:#000;font-family:'Liberation Sans','IPAGothic',sans-serif;transform:scaleX(0.8733);transform-origin:0 0;">K</span>
<div style="left:400px;top:93px;width:1px;height:21px;background:#808080"></div>
<div style="left:401px;top:93px;width:1px;height:21px;background:#ffffff"></div>
<span class="t" style="left:410px;top:95px;font-size:12px;line-height:14px;color:#000;font-family:'Liberation Mono',monospace;transform:scaleX(0.6247);transform-origin:0 0;">I2</span>
<div style="left:442px;top:93px;width:1px;height:21px;background:#808080"></div>
<div style="left:443px;top:93px;width:1px;height:21px;background:#ffffff"></div>
<span class="t" style="left:453px;top:95px;font-size:12px;line-height:14px;color:#000;font-family:'Liberation Sans','IPAGothic',sans-serif;transform:scaleX(0.9225);transform-origin:0 0;">C</span>
<div style="left:484px;top:93px;width:1px;height:21px;background:#808080"></div>
<div style="left:485px;top:93px;width:1px;height:21px;background:#ffffff"></div>
<span class="t" style="left:495px;top:95px;font-size:12px;line-height:14px;color:#000;font-family:'Liberation Sans','IPAGothic',sans-serif;transform:scaleX(0.8733);transform-origin:0 0;">B</span>
<div style="left:526px;top:93px;width:1px;height:21px;background:#808080"></div>
<div style="left:527px;top:93px;width:1px;height:21px;background:#ffffff"></div>
<span class="t" style="left:537px;top:95px;font-size:12px;line-height:14px;color:#000;font-family:'Liberation Sans','IPAGothic',sans-serif;transform:scaleX(0.9225);transform-origin:0 0;">C</span>
<div style="left:568px;top:93px;width:1px;height:21px;background:#808080"></div>
<div style="left:569px;top:93px;width:1px;height:21px;background:#ffffff"></div>
<span class="t" style="left:579px;top:95px;font-size:12px;line-height:14px;color:#000;font-family:'Liberation Sans','IPAGothic',sans-serif;transform:scaleX(0.8072);transform-origin:0 0;">D</span>
<div style="left:610px;top:93px;width:1px;height:21px;background:#808080"></div>
<div style="left:611px;top:93px;width:1px;height:21px;background:#ffffff"></div>
<span class="t" style="left:621px;top:95px;font-size:12px;line-height:14px;color:#000;font-family:'Liberation Sans','IPAGothic',sans-serif;transform:scaleX(0.7485);transform-origin:0 0;">E</span>
<div style="left:652px;top:93px;width:1px;height:21px;background:#808080"></div>
<div style="left:653px;top:93px;width:1px;height:21px;background:#ffffff"></div>
<span class="t" style="left:663px;top:95px;font-size:12px;line-height:14px;color:#000;font-family:'Liberation Sans','IPAGothic',sans-serif;transform:scaleX(0.7485);transform-origin:0 0;">E</span>
<div style="left:694px;top:93px;width:1px;height:21px;background:#808080"></div>
<div style="left:695px;top:93px;width:1px;height:21px;background:#ffffff"></div>
<span class="t" style="left:705px;top:95px;font-size:12px;line-height:14px;color:#000;font-family:'Liberation Sans','IPAGothic',sans-serif;transform:scaleX(0.8562);transform-origin:0 0;">O</span>
<div style="left:736px;top:93px;width:1px;height:21px;background:#808080"></div>
<div style="left:737px;top:93px;width:1px;height:21px;background:#ffffff"></div>
<div style="left:6px;top:117px;width:1px;height:24px;background:#ffffff"></div>
<div style="left:8px;top:117px;width:1px;height:24px;background:#808080"></div>
<div style="left:11px;top:117px;width:157px;height:14px;background:#d4d0c8;box-shadow:inset -1px -1px 0 #ffffff,inset 1px 1px 0 #808080;"></div>
<span class="t" style="left:13px;top:118px;font-size:11px;line-height:13px;color:#000;font-family:'DejaVu Sans','Liberation Sans',sans-serif;font-weight:bold;transform:scaleX(0.8313);transform-origin:0 0;">8850Map 303SqDistBs2</span>
<span class="t" style="left:17px;top:132px;font-size:8px;line-height:10px;color:#000;font-family:'DejaVu Sans','Liberation Sans',sans-serif;transform:scaleX(0.9366);transform-origin:0 0;">M:</span>
<div style="left:27px;top:132px;width:29px;height:9px;background:#d4d0c8;box-shadow:inset -1px -1px 0 #ffffff,inset 1px 1px 0 #808080;"></div>
<span class="t" style="right:971px;top:131px;font-size:9px;line-height:11px;color:#000;font-family:'DejaVu Sans','Liberation Sans',sans-serif;font-weight:bold;transform:scaleX(1.0374);transform-origin:100% 0;">41</span>
<span class="t" style="left:67px;top:132px;font-size:8px;line-height:10px;color:#000;font-family:'DejaVu Sans','Liberation Sans',sans-serif;transform:scaleX(0.8384);transform-origin:0 0;">L:</span>
<div style="left:74px;top:132px;width:27px;height:9px;background:#d4d0c8;box-shadow:inset -1px -1px 0 #ffffff,inset 1px 1px 0 #808080;"></div>
<span class="t" style="right:924px;top:131px;font-size:9px;line-height:11px;color:#000;font-family:'DejaVu Sans','Liberation Sans',sans-serif;font-weight:bold;transform:scaleX(1.1172);transform-origin:100% 0;">4</span>
<span class="t" style="left:106px;top:132px;font-size:8px;line-height:10px;color:#000;font-family:'DejaVu Sans','Liberation Sans',sans-serif;transform:scaleX(0.9917);transform-origin:0 0;">PC:</span>
<div style="left:120px;top:132px;width:28px;height:9px;background:#d4d0c8;box-shadow:inset -1px -1px 0 #ffffff,inset 1px 1px 0 #808080;"></div>
<span class="t" style="right:877px;top:131px;font-size:9px;line-height:11px;color:#000;font-family:'DejaVu Sans','Liberation Sans',sans-serif;font-weight:bold;transform:scaleX(1.0374);transform-origin:100% 0;">39</span>
<span class="t" style="left:171px;top:115px;font-size:8px;line-height:10px;color:#000;font-family:'DejaVu Sans','Liberation Sans',sans-serif;transform:scaleX(0.9320);transform-origin:0 0;">VOL</span>
<div style="left:170px;top:123px;width:27px;height:8px;background:#000"></div>
<div style="left:170px;top:123px;width:27px;height:1px;background:#808080"></div>
<div style="left:170px;top:131px;width:28px;height:1px;background:#ffffff"></div>
<div style="left:197px;top:123px;width:1px;height:9px;background:#ffffff"></div>
<div style="left:170px;top:132px;width:28px;height:9px;background:#d4d0c8;box-shadow:inset -1px -1px 0 #ffffff,inset 1px 1px 0 #808080;"></div>
<span class="t" style="right:827px;top:131px;font-size:9px;line-height:11px;color:#000;font-family:'DejaVu Sans','Liberation Sans',sans-serif;font-weight:bold;transform:scaleX(1.0374);transform-origin:100% 0;">105</span>
<span class="t" style="left:200px;top:115px;font-size:8px;line-height:10px;color:#000;font-family:'DejaVu Sans','Liberation Sans',sans-serif;transform:scaleX(0.9766);transform-origin:0 0;">EXP</span>
<div style="left:199px;top:123px;width:27px;height:8px;background:#000"></div>
<div style="left:199px;top:123px;width:27px;height:1px;background:#808080"></div>
<div style="left:199px;top:131px;width:28px;height:1px;background:#ffffff"></div>
<div style="left:226px;top:123px;width:1px;height:9px;background:#ffffff"></div>
<div style="left:199px;top:132px;width:28px;height:9px;background:#d4d0c8;box-shadow:inset -1px -1px 0 #ffffff,inset 1px 1px 0 #808080;"></div>
<span class="t" style="right:798px;top:131px;font-size:9px;line-height:11px;color:#000;font-family:'DejaVu Sans','Liberation Sans',sans-serif;font-weight:bold;transform:scaleX(1.0374);transform-origin:100% 0;">127</span>
<span class="t" style="left:229px;top:115px;font-size:8px;line-height:10px;color:#000;font-family:'DejaVu Sans','Liberation Sans',sans-serif;transform:scaleX(0.9505);transform-origin:0 0;">PAN</span>
<div style="left:228px;top:123px;width:27px;height:8px;background:#000"></div>
<div style="left:228px;top:123px;width:27px;height:1px;background:#808080"></div>
<div style="left:228px;top:131px;width:28px;height:1px;background:#ffffff"></div>
<div style="left:255px;top:123px;width:1px;height:9px;background:#ffffff"></div>
<div style="left:228px;top:132px;width:28px;height:9px;background:#d4d0c8;box-shadow:inset -1px -1px 0 #ffffff,inset 1px 1px 0 #808080;"></div>
<span class="t" style="right:769px;top:131px;font-size:9px;line-height:11px;color:#000;font-family:'DejaVu Sans','Liberation Sans',sans-serif;font-weight:bold;transform:scaleX(1.0374);transform-origin:100% 0;">0</span>
<span class="t" style="left:258px;top:115px;font-size:8px;line-height:10px;color:#000;font-family:'DejaVu Sans','Liberation Sans',sans-serif;transform:scaleX(1.0065);transform-origin:0 0;">P.BEND</span>
<div style="left:257px;top:123px;width:40px;height:8px;background:#000"></div>
<div style="left:257px;top:123px;width:40px;height:1px;background:#808080"></div>
<div style="left:257px;top:131px;width:41px;height:1px;background:#ffffff"></div>
<div style="left:297px;top:123px;width:1px;height:9px;background:#ffffff"></div>
<div style="left:257px;top:132px;width:41px;height:9px;background:#d4d0c8;box-shadow:inset -1px -1px 0 #ffffff,inset 1px 1px 0 #808080;"></div>
<span class="t" style="right:727px;top:131px;font-size:9px;line-height:11px;color:#000;font-family:'DejaVu Sans','Liberation Sans',sans-serif;font-weight:bold;transform:scaleX(1.0374);transform-origin:100% 0;">0</span>
<span class="t" style="left:300px;top:115px;font-size:8px;line-height:10px;color:#000;font-family:'DejaVu Sans','Liberation Sans',sans-serif;transform:scaleX(0.8781);transform-origin:0 0;">MOD</span>
<div style="left:299px;top:123px;width:27px;height:8px;background:#000"></div>
<div style="left:299px;top:123px;width:27px;height:1px;background:#808080"></div>
<div style="left:299px;top:131px;width:28px;height:1px;background:#ffffff"></div>
<div style="left:326px;top:123px;width:1px;height:9px;background:#ffffff"></div>
<div style="left:299px;top:132px;width:28px;height:9px;background:#d4d0c8;box-shadow:inset -1px -1px 0 #ffffff,inset 1px 1px 0 #808080;"></div>
<span class="t" style="right:698px;top:131px;font-size:9px;line-height:11px;color:#000;font-family:'DejaVu Sans','Liberation Sans',sans-serif;font-weight:bold;transform:scaleX(1.0374);transform-origin:100% 0;">0</span>
<span class="t" style="left:329px;top:115px;font-size:8px;line-height:10px;color:#000;font-family:'DejaVu Sans','Liberation Sans',sans-serif;transform:scaleX(0.8719);transform-origin:0 0;">HOLD</span>
<div style="left:328px;top:123px;width:27px;height:8px;background:#000"></div>
<div style="left:328px;top:123px;width:27px;height:1px;background:#808080"></div>
<div style="left:328px;top:131px;width:28px;height:1px;background:#ffffff"></div>
<div style="left:355px;top:123px;width:1px;height:9px;background:#ffffff"></div>
<div style="left:328px;top:132px;width:28px;height:9px;background:#d4d0c8;box-shadow:inset -1px -1px 0 #ffffff,inset 1px 1px 0 #808080;"></div>
<span class="t" style="right:669px;top:131px;font-size:9px;line-height:11px;color:#000;font-family:'DejaVu Sans','Liberation Sans',sans-serif;font-weight:bold;transform:scaleX(1.0374);transform-origin:100% 0;">0</span>
<span class="t" style="left:358px;top:115px;font-size:8px;line-height:10px;color:#000;font-family:'DejaVu Sans','Liberation Sans',sans-serif;transform:scaleX(0.9187);transform-origin:0 0;">CUT</span>
<div style="left:357px;top:123px;width:27px;height:8px;background:#000"></div>
<div style="left:357px;top:123px;width:27px;height:1px;background:#808080"></div>
<div style="left:357px;top:131px;width:28px;height:1px;background:#ffffff"></div>
<div style="left:384px;top:123px;width:1px;height:9px;background:#ffffff"></div>
<div style="left:357px;top:132px;width:28px;height:9px;background:#d4d0c8;box-shadow:inset -1px -1px 0 #ffffff,inset 1px 1px 0 #808080;"></div>
<span class="t" style="right:640px;top:131px;font-size:9px;line-height:11px;color:#000;font-family:'DejaVu Sans','Liberation Sans',sans-serif;font-weight:bold;transform:scaleX(1.0374);transform-origin:100% 0;">0</span>
<span class="t" style="left:387px;top:115px;font-size:8px;line-height:10px;color:#000;font-family:'DejaVu Sans','Liberation Sans',sans-serif;transform:scaleX(0.9545);transform-origin:0 0;">RESO</span>
<div style="left:386px;top:123px;width:27px;height:8px;background:#000"></div>
<div style="left:386px;top:123px;width:27px;height:1px;background:#808080"></div>
<div style="left:386px;top:131px;width:28px;height:1px;background:#ffffff"></div>
<div style="left:413px;top:123px;width:1px;height:9px;background:#ffffff"></div>
<div style="left:386px;top:132px;width:28px;height:9px;background:#d4d0c8;box-shadow:inset -1px -1px 0 #ffffff,inset 1px 1px 0 #808080;"></div>
<span class="t" style="right:611px;top:131px;font-size:9px;line-height:11px;color:#000;font-family:'DejaVu Sans','Liberation Sans',sans-serif;font-weight:bold;transform:scaleX(1.0374);transform-origin:100% 0;">0</span>
<span class="t" style="left:416px;top:115px;font-size:8px;line-height:10px;color:#000;font-family:'DejaVu Sans','Liberation Sans',sans-serif;transform:scaleX(0.9320);transform-origin:0 0;">REV</span>
<div style="left:415px;top:123px;width:27px;height:8px;background:#000"></div>
<div style="left:415px;top:123px;width:27px;height:1px;background:#808080"></div>
<div style="left:415px;top:131px;width:28px;height:1px;background:#ffffff"></div>
<div style="left:442px;top:123px;width:1px;height:9px;background:#ffffff"></div>
<div style="left:415px;top:132px;width:28px;height:9px;background:#d4d0c8;box-shadow:inset -1px -1px 0 #ffffff,inset 1px 1px 0 #808080;"></div>
<span class="t" style="right:582px;top:131px;font-size:9px;line-height:11px;color:#000;font-family:'DejaVu Sans','Liberation Sans',sans-serif;font-weight:bold;transform:scaleX(1.0374);transform-origin:100% 0;">10</span>
<span class="t" style="left:445px;top:115px;font-size:8px;line-height:10px;color:#000;font-family:'DejaVu Sans','Liberation Sans',sans-serif;transform:scaleX(0.8935);transform-origin:0 0;">CHO</span>
<div style="left:444px;top:123px;width:27px;height:8px;background:#000"></div>
<div style="left:444px;top:123px;width:27px;height:1px;background:#808080"></div>
<div style="left:444px;top:131px;width:28px;height:1px;background:#ffffff"></div>
<div style="left:471px;top:123px;width:1px;height:9px;background:#ffffff"></div>
<div style="left:444px;top:132px;width:28px;height:9px;background:#d4d0c8;box-shadow:inset -1px -1px 0 #ffffff,inset 1px 1px 0 #808080;"></div>
<span class="t" style="right:553px;top:131px;font-size:9px;line-height:11px;color:#000;font-family:'DejaVu Sans','Liberation Sans',sans-serif;font-weight:bold;transform:scaleX(1.0374);transform-origin:100% 0;">30</span>
<span class="t" style="left:474px;top:115px;font-size:8px;line-height:10px;color:#000;font-family:'DejaVu Sans','Liberation Sans',sans-serif;transform:scaleX(1.0378);transform-origin:0 0;">DLY</span>
<div style="left:473px;top:123px;width:27px;height:8px;background:#000"></div>
<div style="left:473px;top:123px;width:27px;height:1px;background:#808080"></div>
<div style="left:473px;top:131px;width:28px;height:1px;background:#ffffff"></div>
<div style="left:500px;top:123px;width:1px;height:9px;background:#ffffff"></div>
<div style="left:473px;top:132px;width:28px;height:9px;background:#d4d0c8;box-shadow:inset -1px -1px 0 #ffffff,inset 1px 1px 0 #808080;"></div>
<span class="t" style="right:524px;top:131px;font-size:9px;line-height:11px;color:#000;font-family:'DejaVu Sans','Liberation Sans',sans-serif;font-weight:bold;transform:scaleX(1.0374);transform-origin:100% 0;">0</span>
<div style="left:171px;top:124px;width:21px;height:7px;background:#ff0000"></div>
<div style="left:200px;top:124px;width:26px;height:7px;background:#ff0000"></div>
<div style="left:241px;top:124px;width:1px;height:7px;background:#d4d0c8"></div>
<div style="left:276px;top:124px;width:1px;height:7px;background:#30a030"></div>
<div style="left:370px;top:124px;width:1px;height:7px;background:#c0a070"></div>
<div style="left:399px;top:124px;width:1px;height:7px;background:#c0a070"></div>
<div style="left:415px;top:124px;width:2px;height:7px;background:#f0f080"></div>
<div style="left:444px;top:124px;width:6px;height:7px;background:#f0f060"></div>
<div style="left:501px;top:117px;width:377px;height:24px;background:#fff;box-shadow:inset 1px 0 0 #808080,inset -1px -1px 0 #808080"></div>
<svg style="left:502px;top:117px" width="375" height="14" viewBox="0 0 375 14" shape-rendering="crispEdges"><rect x="0" y="0" width="375" height="1" fill="#000"/><rect x="0" y="13" width="375" height="1" fill="#000"/><rect x="3" y="1" width="3" height="7" fill="#000"/><rect x="4" y="1" width="1" height="12" fill="#000"/><rect x="8" y="1" width="3" height="7" fill="#000"/><rect x="9" y="1" width="1" height="12" fill="#000"/><rect x="14" y="1" width="1" height="12" fill="#000"/><rect x="18" y="1" width="3" height="7" fill="#000"/><rect x="19" y="1" width="1" height="12" fill="#000"/><rect x="23" y="1" width="3" height="7" fill="#000"/><rect x="24" y="1" width="1" height="12" fill="#000"/><rect x="28" y="1" width="3" height="7" fill="#000"/><rect x="29" y="1" width="1" height="12" fill="#000"/><rect x="34" y="1" width="1" height="12" fill="#000"/><rect x="38" y="1" width="3" height="7" fill="#000"/><rect x="39" y="1" width="1" height="12" fill="#000"/><rect x="43" y="1" width="3" height="7" fill="#000"/><rect x="44" y="1" width="1" height="12" fill="#000"/><rect x="49" y="1" width="1" height="12" fill="#000"/><rect x="53" y="1" width="3" height="7" fill="#000"/><rect x="54" y="1" width="1" height="12" fill="#000"/><rect x="58" y="1" width="3" height="7" fill="#000"/><rect x="59" y="1" width="1" height="12" fill="#000"/><rect x="63" y="1" width="3" height="7" fill="#000"/><rect x="64" y="1" width="1" height="12" fill="#000"/><rect x="69" y="1" width="1" height="12" fill="#000"/><rect x="73" y="1" width="3" height="7" fill="#000"/><rect x="74" y="1" width="1" height="12" fill="#000"/><rect x="78" y="1" width="3" height="7" fill="#000"/><rect x="79" y="1" width="1" height="12" fill="#000"/><rect x="84" y="1" width="1" height="12" fill="#000"/><rect x="88" y="1" width="3" height="7" fill="#000"/><rect x="89" y="1" width="1" height="12" fill="#000"/><rect x="93" y="1" width="3" height="7" fill="#000"/><rect x="94" y="1" width="1" height="12" fill="#000"/><rect x="98" y="1" width="3" height="7" fill="#000"/><rect x="99" y="1" width="1" height="12" fill="#000"/><rect x="104" y="1" width="1" height="12" fill="#000"/><rect x="108" y="1" width="3" height="7" fill="#000"/><rect x="109" y="1" width="1" height="12" fill="#000"/><rect x="113" y="1" width="3" height="7" fill="#000"/><rect x="114" y="1" width="1" height="12" fill="#000"/><rect x="119" y="1" width="1" height="12" fill="#000"/><rect x="123" y="1" width="3" height="7" fill="#000"/><rect x="124" y="1" width="1" height="12" fill="#000"/><rect x="128" y="1" width="3" height="7" fill="#000"/><rect x="129" y="1" width="1" height="12" fill="#000"/><rect x="133" y="1" width="3" height="7" fill="#000"/><rect x="134" y="1" width="1" height="12" fill="#000"/><rect x="139" y="1" width="1" height="12" fill="#000"/><rect x="143" y="1" width="3" height="7" fill="#000"/><rect x="144" y="1" width="1" height="12" fill="#000"/><rect x="148" y="1" width="3" height="7" fill="#000"/><rect x="149" y="1" width="1" height="12" fill="#000"/><rect x="154" y="1" width="1" height="12" fill="#000"/><rect x="158" y="1" width="3" height="7" fill="#000"/><rect x="159" y="1" width="1" height="12" fill="#000"/><rect x="163" y="1" width="3" height="7" fill="#000"/><rect x="164" y="1" width="1" height="12" fill="#000"/><rect x="168" y="1" width="3" height="7" fill="#000"/><rect x="169" y="1" width="1" height="12" fill="#000"/><rect x="174" y="1" width="1" height="12" fill="#000"/><rect x="178" y="1" width="3" height="7" fill="#000"/><rect x="179" y="1" width="1" height="12" fill="#000"/><rect x="183" y="1" width="3" height="7" fill="#000"/><rect x="184" y="1" width="1" height="12" fill="#000"/><rect x="189" y="1" width="1" height="12" fill="#000"/><rect x="193" y="1" width="3" height="7" fill="#000"/><rect x="194" y="1" width="1" height="12" fill="#000"/><rect x="198" y="1" width="3" height="7" fill="#000"/><rect x="199" y="1" width="1" height="12" fill="#000"/><rect x="203" y="1" width="3" height="7" fill="#000"/><rect x="204" y="1" width="1" height="12" fill="#000"/><rect x="209" y="1" width="1" height="12" fill="#000"/><rect x="213" y="1" width="3" height="7" fill="#000"/><rect x="214" y="1" width="1" height="12" fill="#000"/><rect x="218" y="1" width="3" height="7" fill="#000"/><rect x="219" y="1" width="1" height="12" fill="#000"/><rect x="224" y="1" width="1" height="12" fill="#000"/><rect x="228" y="1" width="3" height="7" fill="#000"/><rect x="229" y="1" width="1" height="12" fill="#000"/><rect x="233" y="1" width="3" height="7" fill="#000"/><rect x="234" y="1" width="1" height="12" fill="#000"/><rect x="238" y="1" width="3" height="7" fill="#000"/><rect x="239" y="1" width="1" height="12" fill="#000"/><rect x="244" y="1" width="1" height="12" fill="#000"/><rect x="248" y="1" width="3" height="7" fill="#000"/><rect x="249" y="1" width="1" height="12" fill="#000"/><rect x="253" y="1" width="3" height="7" fill="#000"/><rect x="254" y="1" width="1" height="12" fill="#000"/><rect x="259" y="1" width="1" height="12" fill="#000"/><rect x="263" y="1" width="3" height="7" fill="#000"/><rect x="264" y="1" width="1" height="12" fill="#000"/><rect x="268" y="1" width="3" height="7" fill="#000"/><rect x="269" y="1" width="1" height="12" fill="#000"/><rect x="273" y="1" width="3" height="7" fill="#000"/><rect x="274" y="1" width="1" height="12" fill="#000"/><rect x="279" y="1" width="1" height="12" fill="#000"/><rect x="283" y="1" width="3" height="7" fill="#000"/><rect x="284" y="1" width="1" height="12" fill="#000"/><rect x="288" y="1" width="3" height="7" fill="#000"/><rect x="289" y="1" width="1" height="12" fill="#000"/><rect x="294" y="1" width="1" height="12" fill="#000"/><rect x="298" y="1" width="3" height="7" fill="#000"/><rect x="299" y="1" width="1" height="12" fill="#000"/><rect x="303" y="1" width="3" height="7" fill="#000"/><rect x="304" y="1" width="1" height="12" fill="#000"/><rect x="308" y="1" width="3" height="7" fill="#000"/><rect x="309" y="1" width="1" height="12" fill="#000"/><rect x="314" y="1" width="1" height="12" fill="#000"/><rect x="318" y="1" width="3" height="7" fill="#000"/><rect x="319" y="1" width="1" height="12" fill="#000"/><rect x="323" y="1" width="3" height="7" fill="#000"/><rect x="324" y="1" width="1" height="12" fill="#000"/><rect x="329" y="1" width="1" height="12" fill="#000"/><rect x="333" y="1" width="3" height="7" fill="#000"/><rect x="334" y="1" width="1" height="12" fill="#000"/><rect x="338" y="1" width="3" height="7" fill="#000"/><rect x="339" y="1" width="1" height="12" fill="#000"/><rect x="343" y="1" width="3" height="7" fill="#000"/><rect x="344" y="1" width="1" height="12" fill="#000"/><rect x="349" y="1" width="1" height="12" fill="#000"/><rect x="353" y="1" width="3" height="7" fill="#000"/><rect x="354" y="1" width="1" height="12" fill="#000"/><rect x="358" y="1" width="3" height="7" fill="#000"/><rect x="359" y="1" width="1" height="12" fill="#000"/><rect x="364" y="1" width="1" height="12" fill="#000"/><rect x="368" y="1" width="3" height="7" fill="#000"/><rect x="369" y="1" width="1" height="12" fill="#000"/></svg>
<div style="left:880px;top:117px;width:1px;height:24px;background:#808080"></div>
<div style="left:881px;top:117px;width:1px;height:24px;background:#ffffff"></div>
<div style="left:4px;top:142px;width:299px;height:300px;background:#fff"></div>
<div style="left:5px;top:142px;width:282px;height:16px;background:#d4d0c8"></div>
<div style="left:5px;top:142px;width:282px;height:1px;background:#808080"></div>
<div style="left:5px;top:157px;width:282px;height:1px;background:#808080"></div>
<span class="t" style="left:10px;top:144px;font-size:12px;line-height:14px;color:#000;font-family:'Liberation Sans','IPAGothic',sans-serif;transform:scaleX(0.8568);transform-origin:0 0;">Mea</span>
<span class="t" style="left:39px;top:144px;font-size:12px;line-height:14px;color:#000;font-family:'Liberation Sans','IPAGothic',sans-serif;transform:scaleX(0.9739);transform-origin:0 0;">Tick</span>
<span class="t" style="left:68px;top:144px;font-size:12px;line-height:14px;color:#000;font-family:'Liberation Sans','IPAGothic',sans-serif;transform:scaleX(0.8911);transform-origin:0 0;">Step</span>
<span class="t" style="left:98px;top:144px;font-size:12px;line-height:14px;color:#000;font-family:'Liberation Sans','IPAGothic',sans-serif;transform:scaleX(0.9124);transform-origin:0 0;">Event</span>
<span class="t" style="left:197px;top:144px;font-size:12px;line-height:14px;color:#000;font-family:'Liberation Sans','IPAGothic',sans-serif;transform:scaleX(0.8841);transform-origin:0 0;">Gate</span>
<span class="t" style="left:229px;top:144px;font-size:12px;line-height:14px;color:#000;font-family:'Liberation Sans','IPAGothic',sans-serif;transform:scaleX(1.0235);transform-origin:0 0;">Vel/Value</span>
<div style="left:33px;top:144px;width:1px;height:13px;background:#808080"></div>
<div style="left:34px;top:144px;width:1px;height:13px;background:#ffffff"></div>
<div style="left:63px;top:144px;width:1px;height:13px;background:#808080"></div>
<div style="left:64px;top:144px;width:1px;height:13px;background:#ffffff"></div>
<div style="left:93px;top:144px;width:1px;height:13px;background:#808080"></div>
<div style="left:94px;top:144px;width:1px;height:13px;background:#ffffff"></div>
<div style="left:193px;top:144px;width:1px;height:13px;background:#808080"></div>
<div style="left:194px;top:144px;width:1px;height:13px;background:#ffffff"></div>
<div style="left:223px;top:144px;width:1px;height:13px;background:#808080"></div>
<div style="left:224px;top:144px;width:1px;height:13px;background:#ffffff"></div>
<div style="left:283px;top:144px;width:1px;height:13px;background:#808080"></div>
<div style="left:284px;top:144px;width:1px;height:13px;background:#ffffff"></div>
<div style="left:5px;top:158px;width:88px;height:284px;background:#e8f0ff"></div>
<div style="left:93px;top:158px;width:1px;height:284px;background:#a8c8f0"></div>
<div style="left:5px;top:158px;width:282px;height:283px;overflow:hidden">
<span class="t m" style="right:255px;top:0px;color:#000">1</span>
<span class="t m" style="right:225px;top:0px;color:#000">480</span>
<span class="t m" style="right:195px;top:0px;color:#000">60</span>
<span class="t m" style="left:94px;top:0px;color:#a80c0c">Part Level</span>
<span class="t m" style="right:5px;top:0px;color:#a80c0c">105</span>
<span class="t m" style="right:255px;top:15px;color:#000">1</span>
<span class="t m" style="right:225px;top:15px;color:#000">540</span>
<span class="t m" style="right:195px;top:15px;color:#000">60</span>
<span class="t m" style="left:94px;top:15px;color:#0c8c8c">Part Panpot</span>
<span class="t m" style="right:5px;top:15px;color:#0c8c8c">0</span>
<span class="t m" style="right:255px;top:30px;color:#000">1</span>
<span class="t m" style="right:225px;top:30px;color:#000">600</span>
<span class="t m" style="right:195px;top:30px;color:#000">60</span>
<span class="t m" style="left:94px;top:30px;color:#900c90">PC:303SqDistBs2 [41/4/39]</span>
<span class="t m" style="right:255px;top:45px;color:#000">1</span>
<span class="t m" style="right:225px;top:45px;color:#000">660</span>
<span class="t m" style="right:195px;top:45px;color:#000">60</span>
<span class="t m" style="left:94px;top:45px;color:#000">Reverb Send</span>
<span class="t m" style="right:5px;top:45px;color:#000">10</span>
<span class="t m" style="right:255px;top:60px;color:#000">1</span>
<span class="t m" style="right:225px;top:60px;color:#000">720</span>
<span class="t m" style="right:195px;top:60px;color:#000">60</span>
<span class="t m" style="left:94px;top:60px;color:#000">Chorus Send</span>
<span class="t m" style="right:5px;top:60px;color:#000">30</span>
<span class="t m" style="right:255px;top:75px;color:#000">1</span>
<span class="t m" style="right:225px;top:75px;color:#000">780</span>
<span class="t m" style="right:195px;top:75px;color:#000">60</span>
<span class="t m" style="left:94px;top:75px;color:#000">Delay Send</span>
<span class="t m" style="right:5px;top:75px;color:#000">0</span>
<span class="t m" style="right:255px;top:90px;color:#000">1</span>
<span class="t m" style="right:225px;top:90px;color:#000">840</span>
<span class="t m" style="right:195px;top:90px;color:#000">60</span>
<span class="t m" style="left:94px;top:90px;color:#000">Cutoff Frequency</span>
<span class="t m" style="right:5px;top:90px;color:#000">0</span>
<span class="t m" style="right:255px;top:105px;color:#000">1</span>
<span class="t m" style="right:225px;top:105px;color:#000">900</span>
<span class="t m" style="right:195px;top:105px;color:#000">----</span>
<span class="t m" style="left:94px;top:105px;color:#000">Resonance</span>
<span class="t m" style="right:5px;top:105px;color:#000">0</span>
<span class="t m" style="right:255px;top:120px;color:#000">26</span>
<span class="t m" style="right:225px;top:120px;color:#000">0</span>
<span class="t m" style="right:195px;top:120px;color:#000">240</span>
<span class="t m" style="left:94px;top:120px;color:#000">D  2 [ 38]</span>
<span class="t m" style="right:65px;top:120px;color:#000">240</span>
<span class="t m" style="right:5px;top:120px;color:#000">100</span>
<span class="t m" style="right:255px;top:135px;color:#000">26</span>
<span class="t m" style="right:225px;top:135px;color:#000">240</span>
<span class="t m" style="right:195px;top:135px;color:#000">240</span>
<span class="t m" style="left:94px;top:135px;color:#000">D  1 [ 26]</span>
<span class="t m" style="right:65px;top:135px;color:#000">220</span>
<span class="t m" style="right:5px;top:135px;color:#000">100</span>
<span class="t m" style="right:255px;top:150px;color:#000">26</span>
<span class="t m" style="right:225px;top:150px;color:#000">480</span>
<span class="t m" style="right:195px;top:150px;color:#000">240</span>
<span class="t m" style="left:94px;top:150px;color:#000">D  2 [ 38]</span>
<span class="t m" style="right:65px;top:150px;color:#000">70</span>
<span class="t m" style="right:5px;top:150px;color:#000">100</span>
<span class="t m" style="right:255px;top:165px;color:#000">26</span>
<span class="t m" style="right:225px;top:165px;color:#000">720</span>
<span class="t m" style="right:195px;top:165px;color:#000">480</span>
<span class="t m" style="left:94px;top:165px;color:#000">C  2 [ 36]</span>
<span class="t m" style="right:65px;top:165px;color:#000">480</span>
<span class="t m" style="right:5px;top:165px;color:#000">100</span>
<span class="t m" style="right:255px;top:180px;color:#000">26</span>
<span class="t m" style="right:225px;top:180px;color:#000">1200</span>
<span class="t m" style="right:195px;top:180px;color:#000">240</span>
<span class="t m" style="left:94px;top:180px;color:#000">D  2 [ 38]</span>
<span class="t m" style="right:65px;top:180px;color:#000">230</span>
<span class="t m" style="right:5px;top:180px;color:#000">100</span>
<span class="t m" style="right:255px;top:195px;color:#000">26</span>
<span class="t m" style="right:225px;top:195px;color:#000">1440</span>
<span class="t m" style="right:195px;top:195px;color:#000">240</span>
<span class="t m" style="left:94px;top:195px;color:#000">A  2 [ 45]</span>
<span class="t m" style="right:65px;top:195px;color:#000">140</span>
<span class="t m" style="right:5px;top:195px;color:#000">100</span>
<span class="t m" style="right:255px;top:210px;color:#000">26</span>
<span class="t m" style="right:225px;top:210px;color:#000">1680</span>
<span class="t m" style="right:195px;top:210px;color:#000">240</span>
<span class="t m" style="left:94px;top:210px;color:#000">C  2 [ 36]</span>
<span class="t m" style="right:65px;top:210px;color:#000">120</span>
<span class="t m" style="right:5px;top:210px;color:#000">100</span>
<span class="t m" style="right:255px;top:225px;color:#000">27</span>
<span class="t m" style="right:225px;top:225px;color:#000">0</span>
<span class="t m" style="right:195px;top:225px;color:#000">240</span>
<span class="t m" style="left:94px;top:225px;color:#000">D  2 [ 38]</span>
<span class="t m" style="right:65px;top:225px;color:#000">240</span>
<span class="t m" style="right:5px;top:225px;color:#000">100</span>
<span class="t m" style="right:255px;top:240px;color:#000">27</span>
<span class="t m" style="right:225px;top:240px;color:#000">240</span>
<span class="t m" style="right:195px;top:240px;color:#000">240</span>
<span class="t m" style="left:94px;top:240px;color:#000">D  1 [ 26]</span>
<span class="t m" style="right:65px;top:240px;color:#000">220</span>
<span class="t m" style="right:5px;top:240px;color:#000">100</span>
<span class="t m" style="right:255px;top:255px;color:#000">27</span>
<span class="t m" style="right:225px;top:255px;color:#000">480</span>
<span class="t m" style="right:195px;top:255px;color:#000">240</span>
<span class="t m" style="left:94px;top:255px;color:#000">D  2 [ 38]</span>
<span class="t m" style="right:65px;top:255px;color:#000">70</span>
<span class="t m" style="right:5px;top:255px;color:#000">100</span>
<span class="t m" style="right:255px;top:270px;color:#000">27</span>
<span class="t m" style="right:225px;top:270px;color:#000">720</span>
<span class="t m" style="right:195px;top:270px;color:#000">480</span>
<span class="t m" style="left:94px;top:270px;color:#000">C  2 [ 36]</span>
<span class="t m" style="right:65px;top:270px;color:#000">480</span>
<span class="t m" style="right:5px;top:270px;color:#000">100</span>
</div>
<div style="left:5px;top:278px;width:282px;height:1px;background:#a0a0a0"></div>
<div style="left:5px;top:383px;width:282px;height:1px;background:#a0a0a0"></div>
<div style="left:95px;top:279px;width:100px;height:14px;border:1px solid #b0b0b0"></div>
<div class="dz" style="left:287px;top:142px;width:16px;height:300px;"></div>
<div style="left:287px;top:143px;width:16px;height:15px;background:#d4d0c8;box-shadow:inset -1px -1px 0 #404040,inset 1px 1px 0 #d4d0c8,inset -2px -2px 0 #808080,inset 2px 2px 0 #ffffff;"></div>
<div style="left:291px;top:149px;width:0;height:0;border-left:4px solid transparent;border-right:4px solid transparent;border-bottom:4px solid #000"></div>
<div style="left:287px;top:159px;width:16px;height:15px;background:#d4d0c8;box-shadow:inset -1px -1px 0 #404040,inset 1px 1px 0 #d4d0c8,inset -2px -2px 0 #808080,inset 2px 2px 0 #ffffff;"></div>
<div style="left:287px;top:425px;width:16px;height:16px;background:#d4d0c8;box-shadow:inset -1px -1px 0 #404040,inset 1px 1px 0 #d4d0c8,inset -2px -2px 0 #808080,inset 2px 2px 0 #ffffff;"></div>
<div style="left:291px;top:431px;width:0;height:0;border-left:4px solid transparent;border-right:4px solid transparent;border-top:4px solid #000"></div>
<div style="left:4px;top:142px;width:1px;height:300px;background:#808080"></div>
<div style="left:4px;top:441px;width:299px;height:1px;background:#d4d0c8"></div>
<div style="left:133px;top:441px;width:42px;height:6px;background:#d4d0c8;box-shadow:inset -1px -1px 0 #808080,inset 1px 1px 0 #ffffff;"></div>
<div style="left:139px;top:444px;width:1px;height:1px;background:#404040"></div>
<div style="left:143px;top:444px;width:1px;height:1px;background:#404040"></div>
<div style="left:147px;top:444px;width:1px;height:1px;background:#404040"></div>
<div style="left:151px;top:444px;width:1px;height:1px;background:#404040"></div>
<div style="left:155px;top:444px;width:1px;height:1px;background:#404040"></div>
<div style="left:159px;top:444px;width:1px;height:1px;background:#404040"></div>
<div style="left:163px;top:444px;width:1px;height:1px;background:#404040"></div>
<div style="left:167px;top:444px;width:1px;height:1px;background:#404040"></div>
<div style="left:4px;top:447px;width:299px;height:298px;background:#fff"></div>
<div style="left:5px;top:447px;width:282px;height:297px;overflow:hidden">
<div style="left:0;top:0px;width:282px;height:25px;background:#e8f0ff;border-top:1px solid #a8c8f0;border-bottom:1px solid #a8c8f0"></div>
<div style="left:265px;top:0px;width:1px;height:24px;background:#a8c8f0"></div>
<div style="left:0;top:24px;width:282px;height:25px;background:#fff;border-top:1px solid #a8c8f0;border-bottom:1px solid #a8c8f0"></div>
<div style="left:265px;top:24px;width:1px;height:24px;background:#a8c8f0"></div>
<div style="left:0;top:48px;width:282px;height:25px;background:#e8f0ff;border-top:1px solid #a8c8f0;border-bottom:1px solid #a8c8f0"></div>
<div style="left:265px;top:48px;width:1px;height:24px;background:#a8c8f0"></div>
<div style="left:0;top:72px;width:282px;height:25px;background:#fff;border-top:1px solid #a8c8f0;border-bottom:1px solid #a8c8f0"></div>
<div style="left:265px;top:72px;width:1px;height:24px;background:#a8c8f0"></div>
<div style="left:0;top:96px;width:282px;height:25px;background:#e8f0ff;border-top:1px solid #a8c8f0;border-bottom:1px solid #a8c8f0"></div>
<div style="left:265px;top:96px;width:1px;height:24px;background:#a8c8f0"></div>
<div style="left:0;top:120px;width:282px;height:25px;background:#fff;border-top:1px solid #a8c8f0;border-bottom:1px solid #a8c8f0"></div>
<div style="left:265px;top:120px;width:1px;height:24px;background:#a8c8f0"></div>
<div style="left:0;top:144px;width:282px;height:25px;background:#e8f0ff;border-top:1px solid #a8c8f0;border-bottom:1px solid #a8c8f0"></div>
<div style="left:265px;top:144px;width:1px;height:24px;background:#a8c8f0"></div>
<div style="left:0;top:168px;width:282px;height:25px;background:#3e7ede;border-top:1px solid #a8c8f0;border-bottom:1px solid #a8c8f0"></div>
<div style="left:265px;top:168px;width:1px;height:24px;background:#a8c8f0"></div>
<div style="left:0;top:192px;width:282px;height:25px;background:#e8f0ff;border-top:1px solid #a8c8f0;border-bottom:1px solid #a8c8f0"></div>
<div style="left:265px;top:192px;width:1px;height:24px;background:#a8c8f0"></div>
<div style="left:0;top:216px;width:282px;height:25px;background:#fff;border-top:1px solid #a8c8f0;border-bottom:1px solid #a8c8f0"></div>
<div style="left:265px;top:216px;width:1px;height:24px;background:#a8c8f0"></div>
<div style="left:0;top:240px;width:282px;height:25px;background:#e8f0ff;border-top:1px solid #a8c8f0;border-bottom:1px solid #a8c8f0"></div>
<div style="left:265px;top:240px;width:1px;height:24px;background:#a8c8f0"></div>
<div style="left:0;top:264px;width:282px;height:25px;background:#fff;border-top:1px solid #a8c8f0;border-bottom:1px solid #a8c8f0"></div>
<div style="left:265px;top:264px;width:1px;height:24px;background:#a8c8f0"></div>
<div style="left:0;top:288px;width:282px;height:25px;background:#e8f0ff;border-top:1px solid #a8c8f0;border-bottom:1px solid #a8c8f0"></div>
<div style="left:265px;top:288px;width:1px;height:24px;background:#a8c8f0"></div>
</div>
<span class="t" style="left:6px;top:447px;font-size:12px;line-height:14px;color:#000;font-family:'Liberation Sans','IPAGothic',sans-serif;transform:scaleX(0.8427);transform-origin:0 0;">Pad</span>
<span class="t" style="left:14px;top:458px;font-size:12px;line-height:14px;color:#a0a0a0;font-family:'Liberation Sans','IPAGothic',sans-serif;transform:scaleX(0.9405);transform-origin:0 0;">PortA  Ch.02</span>
<svg style="left:273px;top:452px" width="12" height="14" viewBox="0 0 12.500 14"><defs><linearGradient id="sg10" x1="0" y1="0" x2="1" y2="1"><stop offset="0" stop-color="#fff8c8"/><stop offset=".45" stop-color="#e8cc70"/><stop offset="1" stop-color="#a88428"/></linearGradient></defs><path d="M.8 5.200h2.200L8 .8c2.500 0 3.700 3 3.700 6.200S10.500 13.200 8 13.200L3 8.800H.8z" fill="url(#sg10)" stroke="#7c5c14" stroke-width=".8"/><ellipse cx="8.300" cy="7" rx="2.100" ry="5.600" fill="#f4e4a0" stroke="#9c7820" stroke-width=".7"/><ellipse cx="8.600" cy="7" rx=".9" ry="2.200" fill="#a07c24"/></svg>
<span class="t" style="left:6px;top:471px;font-size:12px;line-height:14px;color:#000;font-family:'Liberation Sans','IPAGothic',sans-serif;transform:scaleX(0.9167);transform-origin:0 0;">笛</span>
<span class="t" style="left:14px;top:482px;font-size:12px;line-height:14px;color:#a0a0a0;font-family:'Liberation Sans','IPAGothic',sans-serif;transform:scaleX(0.9405);transform-origin:0 0;">PortA  Ch.03</span>
<svg style="left:273px;top:476px" width="12" height="14" viewBox="0 0 12.500 14"><defs><linearGradient id="sg11" x1="0" y1="0" x2="1" y2="1"><stop offset="0" stop-color="#fff8c8"/><stop offset=".45" stop-color="#e8cc70"/><stop offset="1" stop-color="#a88428"/></linearGradient></defs><path d="M.8 5.200h2.200L8 .8c2.500 0 3.700 3 3.700 6.200S10.500 13.200 8 13.200L3 8.800H.8z" fill="url(#sg11)" stroke="#7c5c14" stroke-width=".8"/><ellipse cx="8.300" cy="7" rx="2.100" ry="5.600" fill="#f4e4a0" stroke="#9c7820" stroke-width=".7"/><ellipse cx="8.600" cy="7" rx=".9" ry="2.200" fill="#a07c24"/></svg>
<span class="t" style="left:6px;top:495px;font-size:12px;line-height:14px;color:#000;font-family:'Liberation Sans','IPAGothic',sans-serif;transform:scaleX(0.8333);transform-origin:0 0;">三味線イントロ</span>
<span class="t" style="left:14px;top:506px;font-size:12px;line-height:14px;color:#a0a0a0;font-family:'Liberation Sans','IPAGothic',sans-serif;transform:scaleX(0.9405);transform-origin:0 0;">PortA  Ch.04</span>
<svg style="left:273px;top:500px" width="12" height="14" viewBox="0 0 12.500 14"><defs><linearGradient id="sg12" x1="0" y1="0" x2="1" y2="1"><stop offset="0" stop-color="#fff8c8"/><stop offset=".45" stop-color="#e8cc70"/><stop offset="1" stop-color="#a88428"/></linearGradient></defs><path d="M.8 5.200h2.200L8 .8c2.500 0 3.700 3 3.700 6.200S10.500 13.200 8 13.200L3 8.800H.8z" fill="url(#sg12)" stroke="#7c5c14" stroke-width=".8"/><ellipse cx="8.300" cy="7" rx="2.100" ry="5.600" fill="#f4e4a0" stroke="#9c7820" stroke-width=".7"/><ellipse cx="8.600" cy="7" rx=".9" ry="2.200" fill="#a07c24"/></svg>
<span class="t" style="left:6px;top:519px;font-size:12px;line-height:14px;color:#000;font-family:'Liberation Sans','IPAGothic',sans-serif;transform:scaleX(0.8427);transform-origin:0 0;">Pad</span>
<span class="t" style="left:14px;top:530px;font-size:12px;line-height:14px;color:#a0a0a0;font-family:'Liberation Sans','IPAGothic',sans-serif;transform:scaleX(0.9405);transform-origin:0 0;">PortA  Ch.05</span>
<svg style="left:273px;top:524px" width="12" height="14" viewBox="0 0 12.500 14"><defs><linearGradient id="sg13" x1="0" y1="0" x2="1" y2="1"><stop offset="0" stop-color="#fff8c8"/><stop offset=".45" stop-color="#e8cc70"/><stop offset="1" stop-color="#a88428"/></linearGradient></defs><path d="M.8 5.200h2.200L8 .8c2.500 0 3.700 3 3.700 6.200S10.500 13.200 8 13.200L3 8.800H.8z" fill="url(#sg13)" stroke="#7c5c14" stroke-width=".8"/><ellipse cx="8.300" cy="7" rx="2.100" ry="5.600" fill="#f4e4a0" stroke="#9c7820" stroke-width=".7"/><ellipse cx="8.600" cy="7" rx=".9" ry="2.200" fill="#a07c24"/></svg>
<span class="t" style="left:6px;top:543px;font-size:12px;line-height:14px;color:#000;font-family:'Liberation Sans','IPAGothic',sans-serif;transform:scaleX(0.9574);transform-origin:0 0;">Left Koto</span>
<span class="t" style="left:14px;top:554px;font-size:12px;line-height:14px;color:#a0a0a0;font-family:'Liberation Sans','IPAGothic',sans-serif;transform:scaleX(0.9405);transform-origin:0 0;">PortA  Ch.06</span>
<svg style="left:273px;top:548px" width="12" height="14" viewBox="0 0 12.500 14"><defs><linearGradient id="sg14" x1="0" y1="0" x2="1" y2="1"><stop offset="0" stop-color="#fff8c8"/><stop offset=".45" stop-color="#e8cc70"/><stop offset="1" stop-color="#a88428"/></linearGradient></defs><path d="M.8 5.200h2.200L8 .8c2.500 0 3.700 3 3.700 6.200S10.500 13.200 8 13.200L3 8.800H.8z" fill="url(#sg14)" stroke="#7c5c14" stroke-width=".8"/><ellipse cx="8.300" cy="7" rx="2.100" ry="5.600" fill="#f4e4a0" stroke="#9c7820" stroke-width=".7"/><ellipse cx="8.600" cy="7" rx=".9" ry="2.200" fill="#a07c24"/></svg>
<span class="t" style="left:6px;top:567px;font-size:12px;line-height:14px;color:#000;font-family:'Liberation Sans','IPAGothic',sans-serif;transform:scaleX(0.9540);transform-origin:0 0;">I Main koto</span>
<span class="t" style="left:14px;top:578px;font-size:12px;line-height:14px;color:#a0a0a0;font-family:'Liberation Sans','IPAGothic',sans-serif;transform:scaleX(0.9405);transform-origin:0 0;">PortA  Ch.07</span>
<svg style="left:273px;top:572px" width="12" height="14" viewBox="0 0 12.500 14"><defs><linearGradient id="sg15" x1="0" y1="0" x2="1" y2="1"><stop offset="0" stop-color="#fff8c8"/><stop offset=".45" stop-color="#e8cc70"/><stop offset="1" stop-color="#a88428"/></linearGradient></defs><path d="M.8 5.200h2.200L8 .8c2.500 0 3.700 3 3.700 6.200S10.500 13.200 8 13.200L3 8.800H.8z" fill="url(#sg15)" stroke="#7c5c14" stroke-width=".8"/><ellipse cx="8.300" cy="7" rx="2.100" ry="5.600" fill="#f4e4a0" stroke="#9c7820" stroke-width=".7"/><ellipse cx="8.600" cy="7" rx=".9" ry="2.200" fill="#a07c24"/></svg>
<span class="t" style="left:6px;top:591px;font-size:12px;line-height:14px;color:#000;font-family:'Liberation Sans','IPAGothic',sans-serif;transform:scaleX(0.8933);transform-origin:0 0;">I2 Pad</span>
<span class="t" style="left:14px;top:602px;font-size:12px;line-height:14px;color:#a0a0a0;font-family:'Liberation Sans','IPAGothic',sans-serif;transform:scaleX(0.9405);transform-origin:0 0;">PortA  Ch.08</span>
<svg style="left:273px;top:596px" width="12" height="14" viewBox="0 0 12.500 14"><defs><linearGradient id="sg16" x1="0" y1="0" x2="1" y2="1"><stop offset="0" stop-color="#fff8c8"/><stop offset=".45" stop-color="#e8cc70"/><stop offset="1" stop-color="#a88428"/></linearGradient></defs><path d="M.8 5.200h2.200L8 .8c2.500 0 3.700 3 3.700 6.200S10.500 13.200 8 13.200L3 8.800H.8z" fill="url(#sg16)" stroke="#7c5c14" stroke-width=".8"/><ellipse cx="8.300" cy="7" rx="2.100" ry="5.600" fill="#f4e4a0" stroke="#9c7820" stroke-width=".7"/><ellipse cx="8.600" cy="7" rx=".9" ry="2.200" fill="#a07c24"/></svg>
<span class="t" style="left:6px;top:615px;font-size:12px;line-height:14px;color:#d8e8ff;font-family:'Liberation Sans','IPAGothic',sans-serif;transform:scaleX(0.8993);transform-origin:0 0;">Bass</span>
<span class="t" style="left:14px;top:626px;font-size:12px;line-height:14px;color:#fff;font-family:'Liberation Sans','IPAGothic',sans-serif;transform:scaleX(0.9405);transform-origin:0 0;">PortA  Ch.09</span>
<svg style="left:273px;top:620px" width="12" height="14" viewBox="0 0 12.500 14"><defs><linearGradient id="sg17" x1="0" y1="0" x2="1" y2="1"><stop offset="0" stop-color="#fff8c8"/><stop offset=".45" stop-color="#e8cc70"/><stop offset="1" stop-color="#a88428"/></linearGradient></defs><path d="M.8 5.200h2.200L8 .8c2.500 0 3.700 3 3.700 6.200S10.500 13.200 8 13.200L3 8.800H.8z" fill="url(#sg17)" stroke="#7c5c14" stroke-width=".8"/><ellipse cx="8.300" cy="7" rx="2.100" ry="5.600" fill="#f4e4a0" stroke="#9c7820" stroke-width=".7"/><ellipse cx="8.600" cy="7" rx=".9" ry="2.200" fill="#a07c24"/></svg>
<span class="t" style="left:6px;top:639px;font-size:12px;line-height:14px;color:#000;font-family:'Liberation Sans','IPAGothic',sans-serif;transform:scaleX(0.9499);transform-origin:0 0;">Bass Unison</span>
<span class="t" style="left:14px;top:650px;font-size:12px;line-height:14px;color:#a0a0a0;font-family:'Liberation Sans','IPAGothic',sans-serif;transform:scaleX(0.9315);transform-origin:0 0;">PortB  Ch.09</span>
<svg style="left:273px;top:644px" width="12" height="14" viewBox="0 0 12.500 14"><defs><linearGradient id="sg18" x1="0" y1="0" x2="1" y2="1"><stop offset="0" stop-color="#fff8c8"/><stop offset=".45" stop-color="#e8cc70"/><stop offset="1" stop-color="#a88428"/></linearGradient></defs><path d="M.8 5.200h2.200L8 .8c2.500 0 3.700 3 3.700 6.200S10.500 13.200 8 13.200L3 8.800H.8z" fill="url(#sg18)" stroke="#7c5c14" stroke-width=".8"/><ellipse cx="8.300" cy="7" rx="2.100" ry="5.600" fill="#f4e4a0" stroke="#9c7820" stroke-width=".7"/><ellipse cx="8.600" cy="7" rx=".9" ry="2.200" fill="#a07c24"/></svg>
<span class="t" style="left:6px;top:663px;font-size:12px;line-height:14px;color:#000;font-family:'Liberation Sans','IPAGothic',sans-serif;transform:scaleX(0.9913);transform-origin:0 0;">Rythm - Ethnic</span>
<span class="t" style="left:14px;top:674px;font-size:12px;line-height:14px;color:#a0a0a0;font-family:'Liberation Sans','IPAGothic',sans-serif;transform:scaleX(0.9405);transform-origin:0 0;">PortA  Ch.10</span>
<svg style="left:273px;top:668px" width="12" height="14" viewBox="0 0 12.500 14"><defs><linearGradient id="sg19" x1="0" y1="0" x2="1" y2="1"><stop offset="0" stop-color="#fff8c8"/><stop offset=".45" stop-color="#e8cc70"/><stop offset="1" stop-color="#a88428"/></linearGradient></defs><path d="M.8 5.200h2.200L8 .8c2.500 0 3.700 3 3.700 6.200S10.500 13.200 8 13.200L3 8.800H.8z" fill="url(#sg19)" stroke="#7c5c14" stroke-width=".8"/><ellipse cx="8.300" cy="7" rx="2.100" ry="5.600" fill="#f4e4a0" stroke="#9c7820" stroke-width=".7"/><ellipse cx="8.600" cy="7" rx=".9" ry="2.200" fill="#a07c24"/></svg>
<span class="t" style="left:6px;top:687px;font-size:12px;line-height:14px;color:#000;font-family:'Liberation Sans','IPAGothic',sans-serif;transform:scaleX(0.9911);transform-origin:0 0;">Rhythm - ASIA</span>
<span class="t" style="left:14px;top:698px;font-size:12px;line-height:14px;color:#a0a0a0;font-family:'Liberation Sans','IPAGothic',sans-serif;transform:scaleX(0.9530);transform-origin:0 0;">PortA  Ch.11</span>
<svg style="left:273px;top:692px" width="12" height="14" viewBox="0 0 12.500 14"><defs><linearGradient id="sg20" x1="0" y1="0" x2="1" y2="1"><stop offset="0" stop-color="#fff8c8"/><stop offset=".45" stop-color="#e8cc70"/><stop offset="1" stop-color="#a88428"/></linearGradient></defs><path d="M.8 5.200h2.200L8 .8c2.500 0 3.700 3 3.700 6.200S10.500 13.200 8 13.200L3 8.800H.8z" fill="url(#sg20)" stroke="#7c5c14" stroke-width=".8"/><ellipse cx="8.300" cy="7" rx="2.100" ry="5.600" fill="#f4e4a0" stroke="#9c7820" stroke-width=".7"/><ellipse cx="8.600" cy="7" rx=".9" ry="2.200" fill="#a07c24"/></svg>
<span class="t" style="left:6px;top:711px;font-size:12px;line-height:14px;color:#000;font-family:'Liberation Sans','IPAGothic',sans-serif;transform:scaleX(0.9347);transform-origin:0 0;">Low String</span>
<span class="t" style="left:14px;top:722px;font-size:12px;line-height:14px;color:#a0a0a0;font-family:'Liberation Sans','IPAGothic',sans-serif;transform:scaleX(0.9405);transform-origin:0 0;">PortA  Ch.12</span>
<svg style="left:273px;top:716px" width="12" height="14" viewBox="0 0 12.500 14"><defs><linearGradient id="sg21" x1="0" y1="0" x2="1" y2="1"><stop offset="0" stop-color="#fff8c8"/><stop offset=".45" stop-color="#e8cc70"/><stop offset="1" stop-color="#a88428"/></linearGradient></defs><path d="M.8 5.200h2.200L8 .8c2.500 0 3.700 3 3.700 6.200S10.500 13.200 8 13.200L3 8.800H.8z" fill="url(#sg21)" stroke="#7c5c14" stroke-width=".8"/><ellipse cx="8.300" cy="7" rx="2.100" ry="5.600" fill="#f4e4a0" stroke="#9c7820" stroke-width=".7"/><ellipse cx="8.600" cy="7" rx=".9" ry="2.200" fill="#a07c24"/></svg>
<div style="left:5px;top:735px;width:282px;height:9px;overflow:hidden"><span class="t" style="left:1px;top:0;font-size:12px;line-height:14px">Melody</span><svg style="left:268px;top:5px" width="12" height="14" viewBox="0 0 12.500 14"><defs><linearGradient id="sg30" x1="0" y1="0" x2="1" y2="1"><stop offset="0" stop-color="#fff8c8"/><stop offset=".45" stop-color="#e8cc70"/><stop offset="1" stop-color="#a88428"/></linearGradient></defs><path d="M.8 5.200h2.200L8 .8c2.500 0 3.700 3 3.700 6.200S10.500 13.200 8 13.200L3 8.800H.8z" fill="url(#sg30)" stroke="#7c5c14" stroke-width=".8"/><ellipse cx="8.300" cy="7" rx="2.100" ry="5.600" fill="#f4e4a0" stroke="#9c7820" stroke-width=".7"/><ellipse cx="8.600" cy="7" rx=".9" ry="2.200" fill="#a07c24"/></svg></div>
<div class="dz" style="left:287px;top:447px;width:16px;height:298px;"></div>
<div style="left:287px;top:447px;width:16px;height:16px;background:#d4d0c8;box-shadow:inset -1px -1px 0 #404040,inset 1px 1px 0 #d4d0c8,inset -2px -2px 0 #808080,inset 2px 2px 0 #ffffff;"></div>
<div style="left:291px;top:453px;width:0;height:0;border-left:4px solid transparent;border-right:4px solid transparent;border-bottom:4px solid #000"></div>
<div style="left:287px;top:490px;width:16px;height:105px;background:#d4d0c8;box-shadow:inset -1px -1px 0 #404040,inset 1px 1px 0 #d4d0c8,inset -2px -2px 0 #808080,inset 2px 2px 0 #ffffff;"></div>
<div style="left:287px;top:728px;width:16px;height:16px;background:#d4d0c8;box-shadow:inset -1px -1px 0 #404040,inset 1px 1px 0 #d4d0c8,inset -2px -2px 0 #808080,inset 2px 2px 0 #ffffff;"></div>
<div style="left:291px;top:734px;width:0;height:0;border-left:4px solid transparent;border-right:4px solid transparent;border-top:4px solid #000"></div>
<div style="left:4px;top:447px;width:1px;height:298px;background:#808080"></div>
<div style="left:4px;top:447px;width:283px;height:1px;background:#808080"></div>
<div style="left:304px;top:142px;width:1px;height:586px;background:#ffffff"></div>
<div style="left:307px;top:142px;width:1px;height:586px;background:#808080"></div>
<div style="left:304px;top:423px;width:5px;height:41px;background:#d4d0c8;box-shadow:inset -1px -1px 0 #808080,inset 1px 1px 0 #ffffff;"></div>
<div style="left:306px;top:431px;width:1px;height:1px;background:#404040"></div>
<div style="left:306px;top:435px;width:1px;height:1px;background:#404040"></div>
<div style="left:306px;top:439px;width:1px;height:1px;background:#404040"></div>
<div style="left:306px;top:443px;width:1px;height:1px;background:#404040"></div>
<div style="left:306px;top:447px;width:1px;height:1px;background:#404040"></div>
<div style="left:306px;top:451px;width:1px;height:1px;background:#404040"></div>
<div style="left:306px;top:455px;width:1px;height:1px;background:#404040"></div>
<div style="left:308px;top:142px;width:696px;height:17px;background:#d4d0c8"></div>
<div style="left:308px;top:142px;width:712px;height:1px;background:#808080"></div>
<div style="left:308px;top:158px;width:696px;height:1px;background:#808080"></div>
<div style="left:309px;top:159px;width:694px;height:403px;overflow:hidden;background:#fff">
<div style="left:0;top:0;width:99px;height:403px;background:linear-gradient(90deg,#ffffff 0%,#f7f7f7 55%,#ebebeb 100%)"></div>
<div style="left:0;top:19px;width:99px;height:2px;background:linear-gradient(180deg,#000 0 1px,#fff 1px 2px)"></div>
<div style="left:0;top:39px;width:99px;height:2px;background:linear-gradient(180deg,#000 0 1px,#fff 1px 2px)"></div>
<div style="left:0;top:60px;width:99px;height:2px;background:linear-gradient(180deg,#000 0 1px,#fff 1px 2px)"></div>
<div style="left:0;top:81px;width:99px;height:2px;background:linear-gradient(180deg,#000 0 1px,#fff 1px 2px)"></div>
<div style="left:0;top:101px;width:99px;height:2px;background:linear-gradient(180deg,#000 0 1px,#fff 1px 2px)"></div>
<div style="left:0;top:122px;width:99px;height:2px;background:linear-gradient(180deg,#000 0 1px,#fff 1px 2px)"></div>
<div style="left:0;top:142px;width:99px;height:2px;background:linear-gradient(180deg,#000 0 1px,#fff 1px 2px)"></div>
<div style="left:0;top:163px;width:99px;height:2px;background:linear-gradient(180deg,#000 0 1px,#fff 1px 2px)"></div>
<div style="left:0;top:183px;width:99px;height:2px;background:linear-gradient(180deg,#000 0 1px,#fff 1px 2px)"></div>
<div style="left:0;top:204px;width:99px;height:2px;background:linear-gradient(180deg,#000 0 1px,#fff 1px 2px)"></div>
<div style="left:0;top:225px;width:99px;height:2px;background:linear-gradient(180deg,#000 0 1px,#fff 1px 2px)"></div>
<div style="left:0;top:245px;width:99px;height:2px;background:linear-gradient(180deg,#000 0 1px,#fff 1px 2px)"></div>
<div style="left:0;top:266px;width:99px;height:2px;background:linear-gradient(180deg,#000 0 1px,#fff 1px 2px)"></div>
<div style="left:0;top:286px;width:99px;height:2px;background:linear-gradient(180deg,#000 0 1px,#fff 1px 2px)"></div>
<div style="left:0;top:307px;width:99px;height:2px;background:linear-gradient(180deg,#000 0 1px,#fff 1px 2px)"></div>
<div style="left:0;top:327px;width:99px;height:2px;background:linear-gradient(180deg,#000 0 1px,#fff 1px 2px)"></div>
<div style="left:0;top:348px;width:99px;height:2px;background:linear-gradient(180deg,#000 0 1px,#fff 1px 2px)"></div>
<div style="left:0;top:369px;width:99px;height:2px;background:linear-gradient(180deg,#000 0 1px,#fff 1px 2px)"></div>
<div style="left:0;top:389px;width:99px;height:2px;background:linear-gradient(180deg,#000 0 1px,#fff 1px 2px)"></div>
<div style="left:101px;top:12px;width:593px;height:12px;background:#e8f0ff"></div>
<div style="left:101px;top:36px;width:593px;height:12px;background:#e8f0ff"></div>
<span class="t" style="left:82px;top:47px;font-size:12px;line-height:14px">C3</span>
<div style="left:101px;top:72px;width:593px;height:12px;background:#e8f0ff"></div>
<div style="left:101px;top:96px;width:593px;height:12px;background:#e8f0ff"></div>
<div style="left:101px;top:120px;width:593px;height:12px;background:#e8f0ff"></div>
<div style="left:101px;top:156px;width:593px;height:12px;background:#e8f0ff"></div>
<div style="left:101px;top:180px;width:593px;height:12px;background:#e8f0ff"></div>
<span class="t" style="left:82px;top:191px;font-size:12px;line-height:14px">C2</span>
<div style="left:101px;top:216px;width:593px;height:12px;background:#e8f0ff"></div>
<div style="left:101px;top:240px;width:593px;height:12px;background:#e8f0ff"></div>
<div style="left:101px;top:264px;width:593px;height:12px;background:#e8f0ff"></div>
<div style="left:101px;top:300px;width:593px;height:12px;background:#e8f0ff"></div>
<div style="left:101px;top:324px;width:593px;height:12px;background:#e8f0ff"></div>
<span class="t" style="left:82px;top:335px;font-size:12px;line-height:14px">C1</span>
<div style="left:101px;top:360px;width:593px;height:12px;background:#e8f0ff"></div>
<div style="left:101px;top:384px;width:593px;height:12px;background:#e8f0ff"></div>
<div style="left:101px;top:12px;width:593px;height:1px;background:#bcd0ea"></div>
<div style="left:101px;top:24px;width:593px;height:1px;background:#bcd0ea"></div>
<div style="left:101px;top:36px;width:593px;height:1px;background:#bcd0ea"></div>
<div style="left:101px;top:48px;width:593px;height:1px;background:#bcd0ea"></div>
<div style="left:101px;top:60px;width:593px;height:1px;background:#000"></div>
<div style="left:101px;top:72px;width:593px;height:1px;background:#bcd0ea"></div>
<div style="left:101px;top:84px;width:593px;height:1px;background:#bcd0ea"></div>
<div style="left:101px;top:96px;width:593px;height:1px;background:#bcd0ea"></div>
<div style="left:101px;top:108px;width:593px;height:1px;background:#bcd0ea"></div>
<div style="left:101px;top:120px;width:593px;height:1px;background:#bcd0ea"></div>
<div style="left:101px;top:132px;width:593px;height:1px;background:#bcd0ea"></div>
<div style="left:101px;top:144px;width:593px;height:1px;background:#bcd0ea"></div>
<div style="left:101px;top:156px;width:593px;height:1px;background:#bcd0ea"></div>
<div style="left:101px;top:168px;width:593px;height:1px;background:#bcd0ea"></div>
<div style="left:101px;top:180px;width:593px;height:1px;background:#bcd0ea"></div>
<div style="left:101px;top:192px;width:593px;height:1px;background:#bcd0ea"></div>
<div style="left:101px;top:204px;width:593px;height:1px;background:#000"></div>
<div style="left:101px;top:216px;width:593px;height:1px;background:#bcd0ea"></div>
<div style="left:101px;top:228px;width:593px;height:1px;background:#bcd0ea"></div>
<div style="left:101px;top:240px;width:593px;height:1px;background:#bcd0ea"></div>
<div style="left:101px;top:252px;width:593px;height:1px;background:#bcd0ea"></div>
<div style="left:101px;top:264px;width:593px;height:1px;background:#bcd0ea"></div>
<div style="left:101px;top:276px;width:593px;height:1px;background:#bcd0ea"></div>
<div style="left:101px;top:288px;width:593px;height:1px;background:#bcd0ea"></div>
<div style="left:101px;top:300px;width:593px;height:1px;background:#bcd0ea"></div>
<div style="left:101px;top:312px;width:593px;height:1px;background:#bcd0ea"></div>
<div style="left:101px;top:324px;width:593px;height:1px;background:#bcd0ea"></div>
<div style="left:101px;top:336px;width:593px;height:1px;background:#bcd0ea"></div>
<div style="left:101px;top:348px;width:593px;height:1px;background:#000"></div>
<div style="left:101px;top:360px;width:593px;height:1px;background:#bcd0ea"></div>
<div style="left:101px;top:372px;width:593px;height:1px;background:#bcd0ea"></div>
<div style="left:101px;top:384px;width:593px;height:1px;background:#bcd0ea"></div>
<div style="left:101px;top:396px;width:593px;height:1px;background:#bcd0ea"></div>
<div style="left:101px;top:408px;width:593px;height:1px;background:#bcd0ea"></div>
<div style="left:0;top:12px;width:50px;height:12px;background:linear-gradient(90deg,#484848,#909090 85%,#303030 92%,#000 100%);border-top:1px solid #000;border-bottom:2px solid #000;box-shadow:1px 2px 2px rgba(0,0,0,.35)"></div>
<div style="left:0;top:36px;width:50px;height:12px;background:linear-gradient(90deg,#484848,#909090 85%,#303030 92%,#000 100%);border-top:1px solid #000;border-bottom:2px solid #000;box-shadow:1px 2px 2px rgba(0,0,0,.35)"></div>
<div style="left:0;top:72px;width:50px;height:12px;background:linear-gradient(90deg,#484848,#909090 85%,#303030 92%,#000 100%);border-top:1px solid #000;border-bottom:2px solid #000;box-shadow:1px 2px 2px rgba(0,0,0,.35)"></div>
<div style="left:0;top:96px;width:50px;height:12px;background:linear-gradient(90deg,#484848,#909090 85%,#303030 92%,#000 100%);border-top:1px solid #000;border-bottom:2px solid #000;box-shadow:1px 2px 2px rgba(0,0,0,.35)"></div>
<div style="left:0;top:120px;width:50px;height:12px;background:linear-gradient(90deg,#484848,#909090 85%,#303030 92%,#000 100%);border-top:1px solid #000;border-bottom:2px solid #000;box-shadow:1px 2px 2px rgba(0,0,0,.35)"></div>
<div style="left:0;top:156px;width:50px;height:12px;background:linear-gradient(90deg,#484848,#909090 85%,#303030 92%,#000 100%);border-top:1px solid #000;border-bottom:2px solid #000;box-shadow:1px 2px 2px rgba(0,0,0,.35)"></div>
<div style="left:0;top:180px;width:50px;height:12px;background:linear-gradient(90deg,#484848,#909090 85%,#303030 92%,#000 100%);border-top:1px solid #000;border-bottom:2px solid #000;box-shadow:1px 2px 2px rgba(0,0,0,.35)"></div>
<div style="left:0;top:216px;width:50px;height:12px;background:linear-gradient(90deg,#484848,#909090 85%,#303030 92%,#000 100%);border-top:1px solid #000;border-bottom:2px solid #000;box-shadow:1px 2px 2px rgba(0,0,0,.35)"></div>
<div style="left:0;top:240px;width:50px;height:12px;background:linear-gradient(90deg,#484848,#909090 85%,#303030 92%,#000 100%);border-top:1px solid #000;border-bottom:2px solid #000;box-shadow:1px 2px 2px rgba(0,0,0,.35)"></div>
<div style="left:0;top:264px;width:50px;height:12px;background:linear-gradient(90deg,#484848,#909090 85%,#303030 92%,#000 100%);border-top:1px solid #000;border-bottom:2px solid #000;box-shadow:1px 2px 2px rgba(0,0,0,.35)"></div>
<div style="left:0;top:300px;width:50px;height:12px;background:linear-gradient(90deg,#484848,#909090 85%,#303030 92%,#000 100%);border-top:1px solid #000;border-bottom:2px solid #000;box-shadow:1px 2px 2px rgba(0,0,0,.35)"></div>
<div style="left:0;top:324px;width:50px;height:12px;background:linear-gradient(90deg,#484848,#909090 85%,#303030 92%,#000 100%);border-top:1px solid #000;border-bottom:2px solid #000;box-shadow:1px 2px 2px rgba(0,0,0,.35)"></div>
<div style="left:0;top:360px;width:50px;height:12px;background:linear-gradient(90deg,#484848,#909090 85%,#303030 92%,#000 100%);border-top:1px solid #000;border-bottom:2px solid #000;box-shadow:1px 2px 2px rgba(0,0,0,.35)"></div>
<div style="left:0;top:384px;width:50px;height:12px;background:linear-gradient(90deg,#484848,#909090 85%,#303030 92%,#000 100%);border-top:1px solid #000;border-bottom:2px solid #000;box-shadow:1px 2px 2px rgba(0,0,0,.35)"></div>
<div style="left:124px;top:0;width:1px;height:403px;background:repeating-linear-gradient(180deg,transparent 0 2px,#b4b4b4 2px 4px)"></div>
<div style="left:148px;top:0;width:1px;height:403px;background:#a8a8a8"></div>
<div style="left:172px;top:0;width:1px;height:403px;background:repeating-linear-gradient(180deg,transparent 0 2px,#b4b4b4 2px 4px)"></div>
<div style="left:196px;top:0;width:1px;height:403px;background:#a8a8a8"></div>
<div style="left:220px;top:0;width:1px;height:403px;background:repeating-linear-gradient(180deg,transparent 0 2px,#b4b4b4 2px 4px)"></div>
<div style="left:244px;top:0;width:1px;height:403px;background:#a8a8a8"></div>
<div style="left:268px;top:0;width:1px;height:403px;background:repeating-linear-gradient(180deg,transparent 0 2px,#b4b4b4 2px 4px)"></div>
<div style="left:292px;top:0;width:1px;height:403px;background:#141474"></div>
<div style="left:316px;top:0;width:1px;height:403px;background:repeating-linear-gradient(180deg,transparent 0 2px,#b4b4b4 2px 4px)"></div>
<div style="left:340px;top:0;width:1px;height:403px;background:#a8a8a8"></div>
<div style="left:364px;top:0;width:1px;height:403px;background:repeating-linear-gradient(180deg,transparent 0 2px,#b4b4b4 2px 4px)"></div>
<div style="left:388px;top:0;width:1px;height:403px;background:#a8a8a8"></div>
<div style="left:412px;top:0;width:1px;height:403px;background:repeating-linear-gradient(180deg,transparent 0 2px,#b4b4b4 2px 4px)"></div>
<div style="left:436px;top:0;width:1px;height:403px;background:#a8a8a8"></div>
<div style="left:460px;top:0;width:1px;height:403px;background:repeating-linear-gradient(180deg,transparent 0 2px,#b4b4b4 2px 4px)"></div>
<div style="left:484px;top:0;width:1px;height:403px;background:#141474"></div>
<div style="left:508px;top:0;width:1px;height:403px;background:repeating-linear-gradient(180deg,transparent 0 2px,#b4b4b4 2px 4px)"></div>
<div style="left:532px;top:0;width:1px;height:403px;background:#a8a8a8"></div>
<div style="left:556px;top:0;width:1px;height:403px;background:repeating-linear-gradient(180deg,transparent 0 2px,#b4b4b4 2px 4px)"></div>
<div style="left:580px;top:0;width:1px;height:403px;background:#a8a8a8"></div>
<div style="left:604px;top:0;width:1px;height:403px;background:repeating-linear-gradient(180deg,transparent 0 2px,#b4b4b4 2px 4px)"></div>
<div style="left:628px;top:0;width:1px;height:403px;background:#a8a8a8"></div>
<div style="left:652px;top:0;width:1px;height:403px;background:repeating-linear-gradient(180deg,transparent 0 2px,#b4b4b4 2px 4px)"></div>
<div style="left:676px;top:0;width:1px;height:403px;background:#141474"></div>
<div style="left:100px;top:168px;width:24px;height:12px;background:#6a9ce6;border:1px solid #0c1c8c"></div>
<div style="left:124px;top:312px;width:22px;height:12px;background:#6a9ce6;border:1px solid #0c1c8c"></div>
<div style="left:148px;top:168px;width:7px;height:12px;background:#6a9ce6;border:1px solid #0c1c8c"></div>
<div style="left:172px;top:192px;width:48px;height:12px;background:#6a9ce6;border:1px solid #0c1c8c"></div>
<div style="left:220px;top:168px;width:23px;height:12px;background:#6a9ce6;border:1px solid #0c1c8c"></div>
<div style="left:244px;top:84px;width:14px;height:12px;background:#6a9ce6;border:1px solid #0c1c8c"></div>
<div style="left:268px;top:192px;width:12px;height:12px;background:#6a9ce6;border:1px solid #0c1c8c"></div>
<div style="left:292px;top:168px;width:24px;height:12px;background:#6a9ce6;border:1px solid #0c1c8c"></div>
<div style="left:316px;top:312px;width:22px;height:12px;background:#6a9ce6;border:1px solid #0c1c8c"></div>
<div style="left:340px;top:168px;width:7px;height:12px;background:#6a9ce6;border:1px solid #0c1c8c"></div>
<div style="left:364px;top:192px;width:48px;height:12px;background:#6a9ce6;border:1px solid #0c1c8c"></div>
<div style="left:412px;top:168px;width:23px;height:12px;background:#6a9ce6;border:1px solid #0c1c8c"></div>
<div style="left:436px;top:84px;width:14px;height:12px;background:#6a9ce6;border:1px solid #0c1c8c"></div>
<div style="left:460px;top:192px;width:12px;height:12px;background:#6a9ce6;border:1px solid #0c1c8c"></div>
<div style="left:484px;top:216px;width:23px;height:12px;background:#6a9ce6;border:1px solid #0c1c8c"></div>
<div style="left:508px;top:360px;width:23px;height:12px;background:#6a9ce6;border:1px solid #0c1c8c"></div>
<div style="left:532px;top:216px;width:8px;height:12px;background:#6a9ce6;border:1px solid #0c1c8c"></div>
<div style="left:556px;top:132px;width:43px;height:12px;background:#6a9ce6;border:1px solid #0c1c8c"></div>
<div style="left:604px;top:216px;width:24px;height:12px;background:#6a9ce6;border:1px solid #0c1c8c"></div>
<div style="left:628px;top:276px;width:24px;height:12px;background:#6a9ce6;border:1px solid #0c1c8c"></div>
<div style="left:652px;top:276px;width:11px;height:12px;background:#6a9ce6;border:1px solid #0c1c8c"></div>
<div style="left:676px;top:216px;width:23px;height:12px;background:#6a9ce6;border:1px solid #0c1c8c"></div>
<div style="left:99px;top:0;width:2px;height:403px;background:#a02c2c"></div>
</div>
<div style="left:408px;top:143px;width:2px;height:16px;background:#a02c2c"></div>
<div style="left:601px;top:142px;width:1px;height:17px;background:#141474"></div>
<div style="left:793px;top:142px;width:1px;height:17px;background:#141474"></div>
<div style="left:985px;top:142px;width:1px;height:17px;background:#141474"></div>
<span class="t" style="left:412px;top:144px;font-size:12px;line-height:14px;color:#000;font-family:'Liberation Sans','IPAGothic',sans-serif;transform:scaleX(0.9516);transform-origin:0 0;">26 I2 (C Maj)</span>
<span class="t" style="left:604px;top:144px;font-size:12px;line-height:14px;color:#000;font-family:'Liberation Sans','IPAGothic',sans-serif;transform:scaleX(0.8982);transform-origin:0 0;">27</span>
<span class="t" style="left:796px;top:144px;font-size:12px;line-height:14px;color:#000;font-family:'Liberation Sans','IPAGothic',sans-serif;transform:scaleX(0.8982);transform-origin:0 0;">28</span>
<span class="t" style="left:988px;top:144px;font-size:12px;line-height:14px;color:#000;font-family:'Liberation Sans','IPAGothic',sans-serif;transform:scaleX(0.8982);transform-origin:0 0;">29</span>
<div class="dz" style="left:1003px;top:143px;width:16px;height:419px;"></div>
<div style="left:1019px;top:142px;width:1px;height:420px;background:#ffffff"></div>
<div style="left:1003px;top:143px;width:16px;height:16px;background:#d4d0c8;box-shadow:inset -1px -1px 0 #404040,inset 1px 1px 0 #d4d0c8,inset -2px -2px 0 #808080,inset 2px 2px 0 #ffffff;"></div>
<div style="left:1007px;top:149px;width:0;height:0;border-left:4px solid transparent;border-right:4px solid transparent;border-bottom:4px solid #000"></div>
<div style="left:1003px;top:385px;width:16px;height:100px;background:#d4d0c8;box-shadow:inset -1px -1px 0 #404040,inset 1px 1px 0 #d4d0c8,inset -2px -2px 0 #808080,inset 2px 2px 0 #ffffff;"></div>
<div style="left:1003px;top:546px;width:16px;height:16px;background:#d4d0c8;box-shadow:inset -1px -1px 0 #404040,inset 1px 1px 0 #d4d0c8,inset -2px -2px 0 #808080,inset 2px 2px 0 #ffffff;"></div>
<div style="left:1007px;top:552px;width:0;height:0;border-left:4px solid transparent;border-right:4px solid transparent;border-top:4px solid #000"></div>
<div style="left:308px;top:562px;width:712px;height:5px;background:#d4d0c8"></div>
<div style="left:645px;top:562px;width:42px;height:5px;background:#d4d0c8;box-shadow:inset -1px -1px 0 #808080,inset 1px 1px 0 #ffffff;"></div>
<div style="left:651px;top:564px;width:1px;height:1px;background:#404040"></div>
<div style="left:655px;top:564px;width:1px;height:1px;background:#404040"></div>
<div style="left:659px;top:564px;width:1px;height:1px;background:#404040"></div>
<div style="left:663px;top:564px;width:1px;height:1px;background:#404040"></div>
<div style="left:667px;top:564px;width:1px;height:1px;background:#404040"></div>
<div style="left:671px;top:564px;width:1px;height:1px;background:#404040"></div>
<div style="left:675px;top:564px;width:1px;height:1px;background:#404040"></div>
<div style="left:679px;top:564px;width:1px;height:1px;background:#404040"></div>
<div class="dz" style="left:309px;top:567px;width:22px;height:22px;box-shadow:inset -1px -1px 0 #ffffff,inset 1px 1px 0 #808080;"></div>
<svg style="left:312px;top:570px" width="16" height="16" viewBox="0 0 16 16"><path d="M4.500 14c-3-3.500-1.500-8 1.500-9.500M6.500 9.500c-1.500-2.500 1-5 3-4s.5 4.500-2 3.500" fill="none" stroke="#000" stroke-width="1.100"/></svg>
<svg style="left:335px;top:570px" width="16" height="16" viewBox="0 0 16 16"><path d="M1 15L15 1" stroke="#000" stroke-width="1.100"/></svg>
<div style="left:356px;top:576px;width:0;height:0;border-left:3px solid transparent;border-right:3px solid transparent;border-top:3px solid #000"></div>
<svg style="left:368px;top:570px" width="16" height="16" viewBox="0 0 16 16"><path d="M1 14c8 0 13-2 13-13" fill="none" stroke="#000" stroke-width="1.200"/></svg>
<svg style="left:391px;top:570px" width="16" height="16" viewBox="0 0 16 16"><path d="M2 15c0-8 3-13 13-13" fill="none" stroke="#000" stroke-width="1.200"/></svg>
<svg style="left:413px;top:570px" width="16" height="16" viewBox="0 0 16 16"><path d="M.5 13.500H2.500V6.500H4.500V10.500H6.500V1.500H8.500V11.500H10.500V4.500H12.500V8.500H14" fill="none" stroke="#000" stroke-width="1" shape-rendering="crispEdges"/></svg>
<svg style="left:436px;top:570px" width="18" height="16" viewBox="0 0 18 16"><path d="M1 9L8 5l8-3" stroke="#a0a0a0" fill="none"/><rect x="1.500" y="9.500" width="15" height="6" fill="#e8e8e8" stroke="#a0a0a0"/><path d="M4 12.500h9" stroke="#a0a0a0" stroke-dasharray="2 1"/></svg>
<div style="left:459px;top:568px;width:1px;height:20px;background:#808080"></div>
<div style="left:460px;top:568px;width:1px;height:20px;background:#ffffff"></div>
<svg style="left:468px;top:570px" width="16" height="16" viewBox="0 0 16 16"><path d="M3 12.500H8.500V6.500H14" fill="none" stroke="#2848c0" stroke-width="1" shape-rendering="crispEdges"/><rect x=".5" y="10.500" width="4" height="4" fill="#c8dcff" stroke="#2848c0"/><rect x="10.500" y="4.500" width="4" height="4" fill="#c8dcff" stroke="#2848c0"/><rect x="7" y="8" width="3" height="3" fill="#7090e8"/></svg>
<div style="left:491px;top:568px;width:1px;height:20px;background:#808080"></div>
<div style="left:492px;top:568px;width:1px;height:20px;background:#ffffff"></div>
<svg style="left:499px;top:570px" width="15" height="15" viewBox="0 0 15 15"><rect x=".5" y=".5" width="14" height="14" fill="none" stroke="#000" stroke-dasharray="3 2" stroke-width="1.200"/></svg>
<svg style="left:522px;top:570px" width="16" height="16" viewBox="0 0 16 16"><path d="M1 5.500C1 3 4 1 6.500 1h2c1.500 0 2.500.5 3.500 1.500l3 3.500c1 1 1 2.500 0 3.500l-4 4c-1 .8-2.500.8-3.500 0L2 8.500c-.8-.8-1-2-1-3z" fill="#fff" stroke="#000" stroke-width="1"/><path d="M1.500 6l6 5.500c1 .8 2.500.8 3.500 0l4.500-4.500c.3 1 .2 2-.6 2.800l-4 4c-1 .8-2.500.8-3.500 0L2 8.500c-.6-.6-.7-1.500-.5-2.500z" fill="#585858" stroke="#000" stroke-width=".8"/></svg>
<div style="left:544px;top:568px;width:1px;height:20px;background:#808080"></div>
<div style="left:545px;top:568px;width:1px;height:20px;background:#ffffff"></div>
<div style="left:550px;top:568px;width:199px;height:20px;background:#fff;box-shadow:inset -1px -1px 0 #ffffff,inset 1px 1px 0 #808080,inset -2px -2px 0 #d4d0c8,inset 2px 2px 0 #404040;"></div>
<span class="t" style="left:553px;top:571px;font-size:12px;line-height:14px;color:#000;font-family:'Liberation Sans','IPAGothic',sans-serif;transform:scaleX(0.9913);transform-origin:0 0;">Velocity</span>
<div style="left:731px;top:570px;width:16px;height:16px;background:#d4d0c8;box-shadow:inset -1px -1px 0 #404040,inset 1px 1px 0 #d4d0c8,inset -2px -2px 0 #808080,inset 2px 2px 0 #ffffff;"></div>
<div style="left:735px;top:576px;width:0;height:0;border-left:4px solid transparent;border-right:4px solid transparent;border-top:4px solid #000"></div>
<div style="left:752px;top:568px;width:1px;height:20px;background:#808080"></div>
<div style="left:753px;top:568px;width:1px;height:20px;background:#ffffff"></div>
<div class="dz" style="left:758px;top:567px;width:23px;height:22px;box-shadow:inset -1px -1px 0 #ffffff,inset 1px 1px 0 #808080;"></div>
<svg style="left:761px;top:570px" width="16" height="17" viewBox="0 0 16 17"><g shape-rendering="crispEdges"><rect x="1" y="0" width="2" height="17" fill="#3878d0"/><rect x="3" y="0" width="6" height="1" fill="#000"/><rect x="8" y="0" width="1" height="6" fill="#000"/><rect x="9" y="5" width="2" height="12" fill="#3878d0"/><rect x="11" y="5" width="4" height="1" fill="#000"/><rect x="14" y="5" width="1" height="12" fill="#000"/></g></svg>
<svg style="left:784px;top:571px" width="16" height="14" viewBox="0 0 16 14"><path d="M5.500 0h5l.5 5.500c0 1 1 1.500 2.500 2l2.500 1.500v4.500H0V9l2.500-1.500c1.500-.5 2.500-1 2.500-2z" fill="#383838"/><path d="M6.500 1v5" stroke="#787878" stroke-width="1"/></svg>
<svg style="left:806px;top:571px" width="17" height="12" viewBox="0 0 17 12"><path d="M0 6h16.500" stroke="#d02020" stroke-width=".9"/><path d="M.5 10.500C2 10 3 .8 5 .8s2.500 10.500 5 10.500S13 2 16 1.500" fill="none" stroke="#d02020" stroke-width="1.100"/></svg>
<svg style="left:828px;top:571px" width="18" height="15" viewBox="0 0 17 15"><path d="M1 2l15 5L1 13" fill="none" stroke="#303030" stroke-width="1.400"/></svg>
<svg style="left:858px;top:570px" width="6" height="16" viewBox="0 0 6 16"><rect x="0" y="0" width="6" height="16" fill="#484848"/><g shape-rendering="crispEdges"><rect x="1" y="1" width="4" height="2" fill="#902018"/><rect x="1" y="4" width="4" height="2" fill="#d83020"/><rect x="1" y="7" width="4" height="2" fill="#38c038"/><rect x="1" y="10" width="4" height="2" fill="#38c038"/><rect x="1" y="13" width="4" height="2" fill="#38c038"/></g></svg>
<svg style="left:876px;top:571px" width="17" height="16" viewBox="0 0 17 16"><rect x=".5" y="4.500" width="16" height="5" fill="#e8f0ff" stroke="#000"/><rect x="1" y="5" width="2" height="4" fill="#e03030"/><path d="M1 11v4.500h2.500M13 15.500v-4.500h2c1.300 0 1.300 2 0 2h-2m2 0l1.500 2.500" fill="none" stroke="#000" stroke-width="1"/></svg>
<svg style="left:900px;top:571px" width="13" height="14" viewBox="0 0 13 14"><path d="M3.500 6.500V4a3 3 0 0 1 6 0v2.500" fill="none" stroke="#c8b060" stroke-width="1.500"/><rect x=".7" y="6" width="11.600" height="7.500" rx="1" fill="#ecc450" stroke="#a88420" stroke-width=".8"/><rect x="1.500" y="6.800" width="10" height="2" fill="#f8e090"/><path d="M6.500 8v3.500M5 10.500h3M5.500 9l1-1.200 1 1.200" stroke="#705008" stroke-width=".9" fill="none"/></svg>
<svg style="left:922px;top:572px" width="16" height="12" viewBox="0 0 16 12"><rect x=".6" y=".6" width="14.800" height="10.800" fill="#e8e8e8" stroke="#000" stroke-width="1.200"/><path d="M3 4h10" stroke="#e02020" stroke-width="1.200"/><path d="M3.800 2.200L1.800 4l2 1.800zM12.200 2.200l2 1.800-2 1.800z" fill="#e02020"/><path d="M1 8h8c2 0 2.500 1 3.500 3" fill="none" stroke="#000" stroke-width="1"/></svg>
<svg style="left:945px;top:572px" width="16" height="12" viewBox="0 0 16 12"><rect x=".6" y=".6" width="14.800" height="10.800" fill="#e8e8e8" stroke="#000" stroke-width="1.200"/><path d="M1 8.500h2.500c1 0 1-6.500 3-6.500s2 6.500 3 6.500" fill="none" stroke="#000" stroke-width="1"/><path d="M12 2.500v7" stroke="#e02020" stroke-width="1.200"/><path d="M10.300 4l1.700-2.200L13.700 4zM10.300 8l1.700 2.200L13.700 8z" fill="#e02020"/></svg>
<svg style="left:970px;top:570px" width="12" height="16" viewBox="0 0 12 16"><rect width="12" height="16" fill="#202020"/><g shape-rendering="crispEdges"><g fill="#38c038"><rect x="1" y="7" width="4" height="2"/><rect x="1" y="10" width="4" height="2"/><rect x="1" y="13" width="4" height="2"/><rect x="7" y="7" width="4" height="2"/><rect x="7" y="10" width="4" height="2"/><rect x="7" y="13" width="4" height="2"/></g><g fill="#d83020"><rect x="1" y="4" width="4" height="2"/><rect x="7" y="4" width="4" height="2"/></g><rect x="1" y="1" width="4" height="2" fill="#902018"/></g></svg>
<div style="left:308px;top:589px;width:712px;height:1px;background:#808080"></div>
<div style="left:409px;top:590px;width:611px;height:138px;background:#fff"></div>
<div style="left:409px;top:590px;width:611px;height:138px;overflow:hidden">
<div style="left:0;top:36px;width:611px;height:1px;background:#a8c4ec"></div>
<div style="left:0;top:68px;width:611px;height:1px;background:#a8c4ec"></div>
<div style="left:0;top:100px;width:611px;height:1px;background:#a8c4ec"></div>
<div style="left:24px;top:5px;width:1px;height:128px;background:repeating-linear-gradient(180deg,transparent 0 2px,#a8a8a8 2px 4px)"></div>
<div style="left:48px;top:5px;width:1px;height:128px;background:#b0b0b0"></div>
<div style="left:72px;top:5px;width:1px;height:128px;background:repeating-linear-gradient(180deg,transparent 0 2px,#a8a8a8 2px 4px)"></div>
<div style="left:96px;top:5px;width:1px;height:128px;background:#b0b0b0"></div>
<div style="left:120px;top:5px;width:1px;height:128px;background:repeating-linear-gradient(180deg,transparent 0 2px,#a8a8a8 2px 4px)"></div>
<div style="left:144px;top:5px;width:1px;height:128px;background:#b0b0b0"></div>
<div style="left:168px;top:5px;width:1px;height:128px;background:repeating-linear-gradient(180deg,transparent 0 2px,#a8a8a8 2px 4px)"></div>
<div style="left:192px;top:5px;width:1px;height:128px;background:#10107c"></div>
<div style="left:216px;top:5px;width:1px;height:128px;background:repeating-linear-gradient(180deg,transparent 0 2px,#a8a8a8 2px 4px)"></div>
<div style="left:240px;top:5px;width:1px;height:128px;background:#b0b0b0"></div>
<div style="left:264px;top:5px;width:1px;height:128px;background:repeating-linear-gradient(180deg,transparent 0 2px,#a8a8a8 2px 4px)"></div>
<div style="left:288px;top:5px;width:1px;height:128px;background:#b0b0b0"></div>
<div style="left:312px;top:5px;width:1px;height:128px;background:repeating-linear-gradient(180deg,transparent 0 2px,#a8a8a8 2px 4px)"></div>
<div style="left:336px;top:5px;width:1px;height:128px;background:#b0b0b0"></div>
<div style="left:360px;top:5px;width:1px;height:128px;background:repeating-linear-gradient(180deg,transparent 0 2px,#a8a8a8 2px 4px)"></div>
<div style="left:384px;top:5px;width:1px;height:128px;background:#10107c"></div>
<div style="left:408px;top:5px;width:1px;height:128px;background:repeating-linear-gradient(180deg,transparent 0 2px,#a8a8a8 2px 4px)"></div>
<div style="left:432px;top:5px;width:1px;height:128px;background:#b0b0b0"></div>
<div style="left:456px;top:5px;width:1px;height:128px;background:repeating-linear-gradient(180deg,transparent 0 2px,#a8a8a8 2px 4px)"></div>
<div style="left:480px;top:5px;width:1px;height:128px;background:#b0b0b0"></div>
<div style="left:504px;top:5px;width:1px;height:128px;background:repeating-linear-gradient(180deg,transparent 0 2px,#a8a8a8 2px 4px)"></div>
<div style="left:528px;top:5px;width:1px;height:128px;background:#b0b0b0"></div>
<div style="left:552px;top:5px;width:1px;height:128px;background:repeating-linear-gradient(180deg,transparent 0 2px,#a8a8a8 2px 4px)"></div>
<div style="left:576px;top:5px;width:1px;height:128px;background:#10107c"></div>
<div style="left:600px;top:5px;width:1px;height:128px;background:repeating-linear-gradient(180deg,transparent 0 2px,#a8a8a8 2px 4px)"></div>
<div style="left:624px;top:5px;width:1px;height:128px;background:#b0b0b0"></div>
<div style="left:0;top:4px;width:611px;height:1px;background:#000"></div>
<div style="left:0;top:133px;width:611px;height:1px;background:#000"></div>
<div style="left:0;top:5px;width:2px;height:128px;background:#a02c2c"></div>
<div style="left:0px;top:32px;width:25px;height:101px;border-top:1px solid #000;border-right:1px solid #000"></div>
<div style="left:24px;top:32px;width:23px;height:101px;border-top:1px solid #000;border-right:1px solid #000"></div>
<div style="left:48px;top:32px;width:8px;height:101px;border-top:1px solid #000;border-right:1px solid #000"></div>
<div style="left:72px;top:32px;width:49px;height:101px;border-top:1px solid #000;border-right:1px solid #000"></div>
<div style="left:120px;top:32px;width:24px;height:101px;border-top:1px solid #000;border-right:1px solid #000"></div>
<div style="left:144px;top:32px;width:15px;height:101px;border-top:1px solid #000;border-right:1px solid #000"></div>
<div style="left:168px;top:32px;width:13px;height:101px;border-top:1px solid #000;border-right:1px solid #000"></div>
<div style="left:192px;top:32px;width:25px;height:101px;border-top:1px solid #000;border-right:1px solid #000"></div>
<div style="left:216px;top:32px;width:23px;height:101px;border-top:1px solid #000;border-right:1px solid #000"></div>
<div style="left:240px;top:32px;width:8px;height:101px;border-top:1px solid #000;border-right:1px solid #000"></div>
<div style="left:264px;top:32px;width:49px;height:101px;border-top:1px solid #000;border-right:1px solid #000"></div>
<div style="left:312px;top:32px;width:24px;height:101px;border-top:1px solid #000;border-right:1px solid #000"></div>
<div style="left:336px;top:32px;width:15px;height:101px;border-top:1px solid #000;border-right:1px solid #000"></div>
<div style="left:360px;top:32px;width:13px;height:101px;border-top:1px solid #000;border-right:1px solid #000"></div>
<div style="left:384px;top:32px;width:24px;height:101px;border-top:1px solid #000;border-right:1px solid #000"></div>
<div style="left:408px;top:32px;width:24px;height:101px;border-top:1px solid #000;border-right:1px solid #000"></div>
<div style="left:432px;top:32px;width:9px;height:101px;border-top:1px solid #000;border-right:1px solid #000"></div>
<div style="left:456px;top:32px;width:44px;height:101px;border-top:1px solid #000;border-right:1px solid #000"></div>
<div style="left:504px;top:32px;width:25px;height:101px;border-top:1px solid #000;border-right:1px solid #000"></div>
<div style="left:528px;top:32px;width:25px;height:101px;border-top:1px solid #000;border-right:1px solid #000"></div>
<div style="left:552px;top:32px;width:12px;height:101px;border-top:1px solid #000;border-right:1px solid #000"></div>
<div style="left:576px;top:32px;width:24px;height:101px;border-top:1px solid #000;border-right:1px solid #000"></div>
<div style="left:600px;top:32px;width:41px;height:101px;border-top:1px solid #000;border-right:1px solid #000"></div>
<div style="left:0px;top:32px;width:2px;height:101px;background:#4a80c8"></div>
<div style="left:24px;top:32px;width:2px;height:101px;background:#4a80c8"></div>
<div style="left:48px;top:32px;width:2px;height:101px;background:#4a80c8"></div>
<div style="left:72px;top:32px;width:2px;height:101px;background:#4a80c8"></div>
<div style="left:120px;top:32px;width:2px;height:101px;background:#4a80c8"></div>
<div style="left:144px;top:32px;width:2px;height:101px;background:#4a80c8"></div>
<div style="left:168px;top:32px;width:2px;height:101px;background:#4a80c8"></div>
<div style="left:192px;top:32px;width:2px;height:101px;background:#4a80c8"></div>
<div style="left:216px;top:32px;width:2px;height:101px;background:#4a80c8"></div>
<div style="left:240px;top:32px;width:2px;height:101px;background:#4a80c8"></div>
<div style="left:264px;top:32px;width:2px;height:101px;background:#4a80c8"></div>
<div style="left:312px;top:32px;width:2px;height:101px;background:#4a80c8"></div>
<div style="left:336px;top:32px;width:2px;height:101px;background:#4a80c8"></div>
<div style="left:360px;top:32px;width:2px;height:101px;background:#4a80c8"></div>
<div style="left:384px;top:32px;width:2px;height:101px;background:#4a80c8"></div>
<div style="left:408px;top:32px;width:2px;height:101px;background:#4a80c8"></div>
<div style="left:432px;top:32px;width:2px;height:101px;background:#4a80c8"></div>
<div style="left:456px;top:32px;width:2px;height:101px;background:#4a80c8"></div>
<div style="left:504px;top:32px;width:2px;height:101px;background:#4a80c8"></div>
<div style="left:528px;top:32px;width:2px;height:101px;background:#4a80c8"></div>
<div style="left:552px;top:32px;width:2px;height:101px;background:#4a80c8"></div>
<div style="left:576px;top:32px;width:2px;height:101px;background:#4a80c8"></div>
<div style="left:600px;top:32px;width:2px;height:101px;background:#4a80c8"></div>
<div style="left:0;top:5px;width:1px;height:128px;background:#a02c2c"></div>
</div>
<span class="t" style="right:619px;top:593px;font-size:12px;line-height:14px;color:#000;font-family:'Liberation Sans','IPAGothic',sans-serif;transform:scaleX(0.8487);transform-origin:100% 0;">127</span>
<span class="t" style="right:619px;top:620px;font-size:12px;line-height:14px;color:#000;font-family:'Liberation Sans','IPAGothic',sans-serif;transform:scaleX(0.8982);transform-origin:100% 0;">96</span>
<span class="t" style="right:619px;top:652px;font-size:12px;line-height:14px;color:#000;font-family:'Liberation Sans','IPAGothic',sans-serif;transform:scaleX(0.8982);transform-origin:100% 0;">64</span>
<span class="t" style="right:619px;top:683px;font-size:12px;line-height:14px;color:#000;font-family:'Liberation Sans','IPAGothic',sans-serif;transform:scaleX(0.8982);transform-origin:100% 0;">32</span>
<span class="t" style="right:619px;top:712px;font-size:12px;line-height:14px;color:#000;font-family:'Liberation Sans','IPAGothic',sans-serif;transform:scaleX(0.8972);transform-origin:100% 0;">0</span>
<div class="dz" style="left:308px;top:728px;width:712px;height:17px;"></div>
<div style="left:308px;top:728px;width:16px;height:17px;background:#d4d0c8;box-shadow:inset -1px -1px 0 #404040,inset 1px 1px 0 #d4d0c8,inset -2px -2px 0 #808080,inset 2px 2px 0 #ffffff;"></div>
<div style="left:313px;top:732px;width:0;height:0;border-top:4px solid transparent;border-bottom:4px solid transparent;border-right:4px solid #000"></div>
<div style="left:441px;top:728px;width:16px;height:17px;background:#d4d0c8;box-shadow:inset -1px -1px 0 #404040,inset 1px 1px 0 #d4d0c8,inset -2px -2px 0 #808080,inset 2px 2px 0 #ffffff;"></div>
<div style="left:1004px;top:728px;width:16px;height:17px;background:#d4d0c8;box-shadow:inset -1px -1px 0 #404040,inset 1px 1px 0 #d4d0c8,inset -2px -2px 0 #808080,inset 2px 2px 0 #ffffff;"></div>
<div style="left:1010px;top:732px;width:0;height:0;border-top:4px solid transparent;border-bottom:4px solid transparent;border-left:4px solid #000"></div>
<div style="left:4px;top:745px;width:1016px;height:21px;background:#d4d0c8"></div>
<div style="left:796px;top:747px;width:166px;height:17px;background:#d4d0c8;box-shadow:inset -1px -1px 0 #ffffff,inset 1px 1px 0 #808080;"></div>
<div style="left:964px;top:747px;width:38px;height:17px;background:#d4d0c8;box-shadow:inset -1px -1px 0 #ffffff,inset 1px 1px 0 #808080;"></div>
<div style="left:868px;top:748px;width:1px;height:15px;background:#ffffff"></div>
<div style="left:869px;top:748px;width:1px;height:15px;background:#808080"></div>
<span class="t" style="left:801px;top:749px;font-size:12px;line-height:14px;color:#000;font-family:'Liberation Sans','IPAGothic',sans-serif;transform:scaleX(0.8761);transform-origin:0 0;">26 : 790</span>
<span class="t" style="left:873px;top:749px;font-size:12px;line-height:14px;color:#000;font-family:'Liberation Sans','IPAGothic',sans-serif;transform:scaleX(0.8234);transform-origin:0 0;">81</span>
<svg style="left:1007px;top:751px" width="13" height="13" viewBox="0 0 13 13" shape-rendering="crispEdges"><path d="M12 1L1 12M12 5L5 12M12 9l-3 3" stroke="#808080" stroke-width="1.400"/><path d="M12 0L0 12M12 4L4 12M12 8l-4 4" stroke="#fff" stroke-width="1"/></svg>
</div></body></html>
